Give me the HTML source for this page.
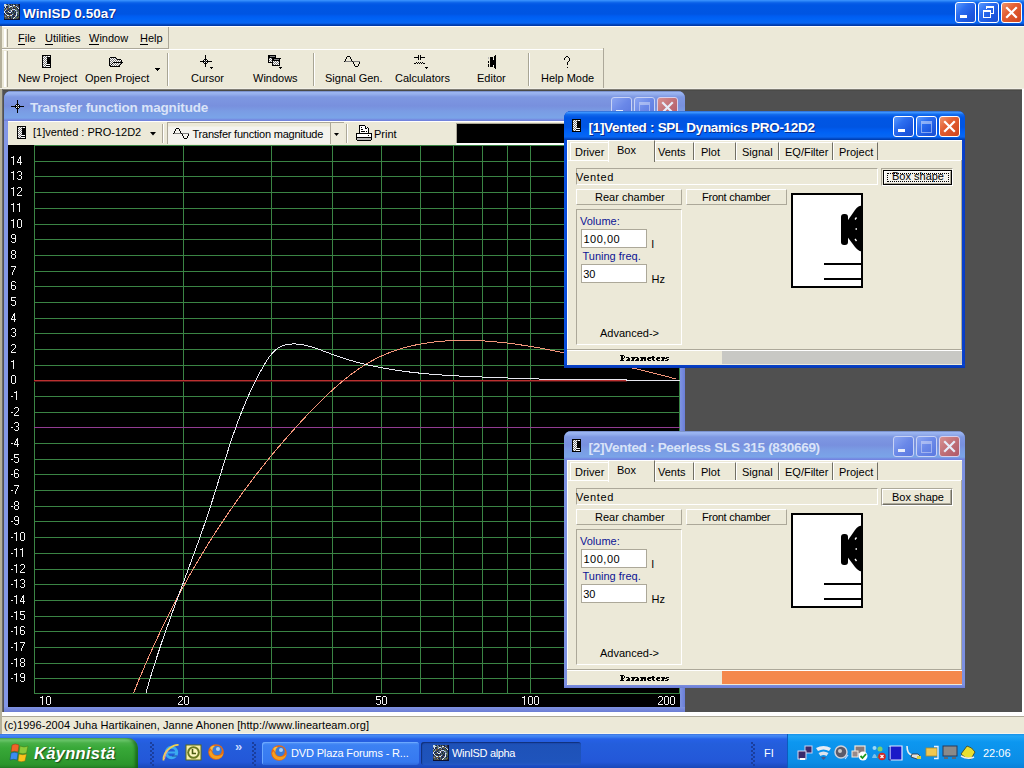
<!DOCTYPE html><html><head><meta charset="utf-8"><title>WinISD</title><style>
html,body{margin:0;padding:0}
body{width:1024px;height:768px;position:relative;overflow:hidden;background:#ECE9D8;font-family:"Liberation Sans",sans-serif;font-size:11px}
.b{position:absolute;box-sizing:content-box}
.t{position:absolute;white-space:nowrap}
svg.b{overflow:visible}
u{text-decoration:none;border-bottom:1px solid currentColor;display:inline-block;line-height:inherit}
</style></head><body>

<div class="b" style="left:0px;top:0px;width:1024px;height:26px;background:linear-gradient(to bottom,#3E96FF 0px,#2C84F8 1px,#1670EE 2px,#0A5EE8 3px,#0056E4 5px,#0055E2 14px,#005CF0 16px,#0063F6 19px,#0866F2 23px,#0452D4 24px,#003AA8 25px,#003AA8 26px)"></div>
<svg class="b" style="left:4px;top:4px" width="16" height="16" shape-rendering="crispEdges"><rect x="0" y="0" width="1" height="1" fill="#C8D8E8"/><rect x="1" y="0" width="1" height="1" fill="#C8D8E8"/><rect x="2" y="0" width="1" height="1" fill="#4E6A48"/><rect x="3" y="0" width="1" height="1" fill="#1A2448"/><rect x="4" y="0" width="1" height="1" fill="#7A8AA0"/><rect x="5" y="0" width="1" height="1" fill="#2A3A60"/><rect x="6" y="0" width="1" height="1" fill="#1A2448"/><rect x="7" y="0" width="1" height="1" fill="#5A6A58"/><rect x="8" y="0" width="1" height="1" fill="#1A2448"/><rect x="9" y="0" width="1" height="1" fill="#5A6A58"/><rect x="10" y="0" width="1" height="1" fill="#1A2448"/><rect x="11" y="0" width="1" height="1" fill="#1A2448"/><rect x="12" y="0" width="1" height="1" fill="#5A6A58"/><rect x="13" y="0" width="1" height="1" fill="#3A4A70"/><rect x="14" y="0" width="1" height="1" fill="#1A2448"/><rect x="15" y="0" width="1" height="1" fill="#0A1030"/><rect x="0" y="1" width="1" height="1" fill="#C8D8E8"/><rect x="1" y="1" width="1" height="1" fill="#C8D8E8"/><rect x="2" y="1" width="1" height="1" fill="#D8E4F4"/><rect x="3" y="1" width="1" height="1" fill="#7A8AA0"/><rect x="4" y="1" width="1" height="1" fill="#5A6A58"/><rect x="5" y="1" width="1" height="1" fill="#8A9AB0"/><rect x="6" y="1" width="1" height="1" fill="#1A2448"/><rect x="7" y="1" width="1" height="1" fill="#3A4A70"/><rect x="8" y="1" width="1" height="1" fill="#2A3A60"/><rect x="9" y="1" width="1" height="1" fill="#D8E4F4"/><rect x="10" y="1" width="1" height="1" fill="#E8F0F8"/><rect x="11" y="1" width="1" height="1" fill="#1A2448"/><rect x="12" y="1" width="1" height="1" fill="#2A3A60"/><rect x="13" y="1" width="1" height="1" fill="#6A5434"/><rect x="14" y="1" width="1" height="1" fill="#1A2448"/><rect x="15" y="1" width="1" height="1" fill="#0A1030"/><rect x="0" y="2" width="1" height="1" fill="#7A8AA0"/><rect x="1" y="2" width="1" height="1" fill="#E8F0F8"/><rect x="2" y="2" width="1" height="1" fill="#1A2448"/><rect x="3" y="2" width="1" height="1" fill="#1A2448"/><rect x="4" y="2" width="1" height="1" fill="#4E6A48"/><rect x="5" y="2" width="1" height="1" fill="#7A8AA0"/><rect x="6" y="2" width="1" height="1" fill="#E8F0F8"/><rect x="7" y="2" width="1" height="1" fill="#D8E4F4"/><rect x="8" y="2" width="1" height="1" fill="#5A6A58"/><rect x="9" y="2" width="1" height="1" fill="#7A8AA0"/><rect x="10" y="2" width="1" height="1" fill="#6A5434"/><rect x="11" y="2" width="1" height="1" fill="#5A6A58"/><rect x="12" y="2" width="1" height="1" fill="#B8CCE8"/><rect x="13" y="2" width="1" height="1" fill="#2A3A60"/><rect x="14" y="2" width="1" height="1" fill="#2A3A60"/><rect x="15" y="2" width="1" height="1" fill="#0A1030"/><rect x="0" y="3" width="1" height="1" fill="#1A2448"/><rect x="1" y="3" width="1" height="1" fill="#D8E4F4"/><rect x="2" y="3" width="1" height="1" fill="#1A2448"/><rect x="3" y="3" width="1" height="1" fill="#2A3A60"/><rect x="4" y="3" width="1" height="1" fill="#5A6A58"/><rect x="5" y="3" width="1" height="1" fill="#B8CCE8"/><rect x="6" y="3" width="1" height="1" fill="#6A5434"/><rect x="7" y="3" width="1" height="1" fill="#2A3A60"/><rect x="8" y="3" width="1" height="1" fill="#8A9AB0"/><rect x="9" y="3" width="1" height="1" fill="#1A2448"/><rect x="10" y="3" width="1" height="1" fill="#5A6A58"/><rect x="11" y="3" width="1" height="1" fill="#6A5434"/><rect x="12" y="3" width="1" height="1" fill="#1A2448"/><rect x="13" y="3" width="1" height="1" fill="#B8CCE8"/><rect x="14" y="3" width="1" height="1" fill="#5A6A58"/><rect x="15" y="3" width="1" height="1" fill="#0A1030"/><rect x="0" y="4" width="1" height="1" fill="#8A9AB0"/><rect x="1" y="4" width="1" height="1" fill="#1A2448"/><rect x="2" y="4" width="1" height="1" fill="#7A8AA0"/><rect x="3" y="4" width="1" height="1" fill="#6A5434"/><rect x="4" y="4" width="1" height="1" fill="#6A5434"/><rect x="5" y="4" width="1" height="1" fill="#2A3A60"/><rect x="6" y="4" width="1" height="1" fill="#2A3A60"/><rect x="7" y="4" width="1" height="1" fill="#5A6A58"/><rect x="8" y="4" width="1" height="1" fill="#6A5434"/><rect x="9" y="4" width="1" height="1" fill="#1A2448"/><rect x="10" y="4" width="1" height="1" fill="#1A2448"/><rect x="11" y="4" width="1" height="1" fill="#2A3A60"/><rect x="12" y="4" width="1" height="1" fill="#4E6A48"/><rect x="13" y="4" width="1" height="1" fill="#1A2448"/><rect x="14" y="4" width="1" height="1" fill="#E8F0F8"/><rect x="15" y="4" width="1" height="1" fill="#0A1030"/><rect x="0" y="5" width="1" height="1" fill="#4E6A48"/><rect x="1" y="5" width="1" height="1" fill="#4E6A48"/><rect x="2" y="5" width="1" height="1" fill="#8A9AB0"/><rect x="3" y="5" width="1" height="1" fill="#6A5434"/><rect x="4" y="5" width="1" height="1" fill="#2A3A60"/><rect x="5" y="5" width="1" height="1" fill="#2A3A60"/><rect x="6" y="5" width="1" height="1" fill="#4E6A48"/><rect x="7" y="5" width="1" height="1" fill="#1A2448"/><rect x="8" y="5" width="1" height="1" fill="#B8CCE8"/><rect x="9" y="5" width="1" height="1" fill="#B8CCE8"/><rect x="10" y="5" width="1" height="1" fill="#D8E4F4"/><rect x="11" y="5" width="1" height="1" fill="#4E6A48"/><rect x="12" y="5" width="1" height="1" fill="#5A6A58"/><rect x="13" y="5" width="1" height="1" fill="#2A3A60"/><rect x="14" y="5" width="1" height="1" fill="#2A3A60"/><rect x="15" y="5" width="1" height="1" fill="#0A1030"/><rect x="0" y="6" width="1" height="1" fill="#6A5434"/><rect x="1" y="6" width="1" height="1" fill="#B8CCE8"/><rect x="2" y="6" width="1" height="1" fill="#2A3A60"/><rect x="3" y="6" width="1" height="1" fill="#3A4A70"/><rect x="4" y="6" width="1" height="1" fill="#1A2448"/><rect x="5" y="6" width="1" height="1" fill="#5A6A58"/><rect x="6" y="6" width="1" height="1" fill="#7A8AA0"/><rect x="7" y="6" width="1" height="1" fill="#D8E4F4"/><rect x="8" y="6" width="1" height="1" fill="#6A5434"/><rect x="9" y="6" width="1" height="1" fill="#3A4A70"/><rect x="10" y="6" width="1" height="1" fill="#2A3A60"/><rect x="11" y="6" width="1" height="1" fill="#B8CCE8"/><rect x="12" y="6" width="1" height="1" fill="#8A9AB0"/><rect x="13" y="6" width="1" height="1" fill="#4E6A48"/><rect x="14" y="6" width="1" height="1" fill="#2A3A60"/><rect x="15" y="6" width="1" height="1" fill="#0A1030"/><rect x="0" y="7" width="1" height="1" fill="#D8E4F4"/><rect x="1" y="7" width="1" height="1" fill="#1A2448"/><rect x="2" y="7" width="1" height="1" fill="#1A2448"/><rect x="3" y="7" width="1" height="1" fill="#2A3A60"/><rect x="4" y="7" width="1" height="1" fill="#D8E4F4"/><rect x="5" y="7" width="1" height="1" fill="#1A2448"/><rect x="6" y="7" width="1" height="1" fill="#3A4A70"/><rect x="7" y="7" width="1" height="1" fill="#D8E4F4"/><rect x="8" y="7" width="1" height="1" fill="#2A3A60"/><rect x="9" y="7" width="1" height="1" fill="#1A2448"/><rect x="10" y="7" width="1" height="1" fill="#5A6A58"/><rect x="11" y="7" width="1" height="1" fill="#2A3A60"/><rect x="12" y="7" width="1" height="1" fill="#7A8AA0"/><rect x="13" y="7" width="1" height="1" fill="#3A4A70"/><rect x="14" y="7" width="1" height="1" fill="#4E6A48"/><rect x="15" y="7" width="1" height="1" fill="#0A1030"/><rect x="0" y="8" width="1" height="1" fill="#E8F0F8"/><rect x="1" y="8" width="1" height="1" fill="#3A4A70"/><rect x="2" y="8" width="1" height="1" fill="#4E6A48"/><rect x="3" y="8" width="1" height="1" fill="#6A5434"/><rect x="4" y="8" width="1" height="1" fill="#5A6A58"/><rect x="5" y="8" width="1" height="1" fill="#E8F0F8"/><rect x="6" y="8" width="1" height="1" fill="#E8F0F8"/><rect x="7" y="8" width="1" height="1" fill="#2A3A60"/><rect x="8" y="8" width="1" height="1" fill="#5A6A58"/><rect x="9" y="8" width="1" height="1" fill="#1A2448"/><rect x="10" y="8" width="1" height="1" fill="#4E6A48"/><rect x="11" y="8" width="1" height="1" fill="#1A2448"/><rect x="12" y="8" width="1" height="1" fill="#D8E4F4"/><rect x="13" y="8" width="1" height="1" fill="#8A9AB0"/><rect x="14" y="8" width="1" height="1" fill="#5A6A58"/><rect x="15" y="8" width="1" height="1" fill="#0A1030"/><rect x="0" y="9" width="1" height="1" fill="#1A2448"/><rect x="1" y="9" width="1" height="1" fill="#E8F0F8"/><rect x="2" y="9" width="1" height="1" fill="#1A2448"/><rect x="3" y="9" width="1" height="1" fill="#1A2448"/><rect x="4" y="9" width="1" height="1" fill="#1A2448"/><rect x="5" y="9" width="1" height="1" fill="#1A2448"/><rect x="6" y="9" width="1" height="1" fill="#2A3A60"/><rect x="7" y="9" width="1" height="1" fill="#1A2448"/><rect x="8" y="9" width="1" height="1" fill="#3A4A70"/><rect x="9" y="9" width="1" height="1" fill="#4E6A48"/><rect x="10" y="9" width="1" height="1" fill="#1A2448"/><rect x="11" y="9" width="1" height="1" fill="#2A3A60"/><rect x="12" y="9" width="1" height="1" fill="#B8CCE8"/><rect x="13" y="9" width="1" height="1" fill="#4E6A48"/><rect x="14" y="9" width="1" height="1" fill="#5A6A58"/><rect x="15" y="9" width="1" height="1" fill="#0A1030"/><rect x="0" y="10" width="1" height="1" fill="#1A2448"/><rect x="1" y="10" width="1" height="1" fill="#5A6A58"/><rect x="2" y="10" width="1" height="1" fill="#B8CCE8"/><rect x="3" y="10" width="1" height="1" fill="#5A6A58"/><rect x="4" y="10" width="1" height="1" fill="#2A3A60"/><rect x="5" y="10" width="1" height="1" fill="#1A2448"/><rect x="6" y="10" width="1" height="1" fill="#6A5434"/><rect x="7" y="10" width="1" height="1" fill="#6A5434"/><rect x="8" y="10" width="1" height="1" fill="#B8CCE8"/><rect x="9" y="10" width="1" height="1" fill="#3A4A70"/><rect x="10" y="10" width="1" height="1" fill="#1A2448"/><rect x="11" y="10" width="1" height="1" fill="#1A2448"/><rect x="12" y="10" width="1" height="1" fill="#E8F0F8"/><rect x="13" y="10" width="1" height="1" fill="#2A3A60"/><rect x="14" y="10" width="1" height="1" fill="#4E6A48"/><rect x="15" y="10" width="1" height="1" fill="#0A1030"/><rect x="0" y="11" width="1" height="1" fill="#3A4A70"/><rect x="1" y="11" width="1" height="1" fill="#6A5434"/><rect x="2" y="11" width="1" height="1" fill="#2A3A60"/><rect x="3" y="11" width="1" height="1" fill="#E8F0F8"/><rect x="4" y="11" width="1" height="1" fill="#D8E4F4"/><rect x="5" y="11" width="1" height="1" fill="#4E6A48"/><rect x="6" y="11" width="1" height="1" fill="#B8CCE8"/><rect x="7" y="11" width="1" height="1" fill="#E8F0F8"/><rect x="8" y="11" width="1" height="1" fill="#2A3A60"/><rect x="9" y="11" width="1" height="1" fill="#1A2448"/><rect x="10" y="11" width="1" height="1" fill="#6A5434"/><rect x="11" y="11" width="1" height="1" fill="#7A8AA0"/><rect x="12" y="11" width="1" height="1" fill="#E8F0F8"/><rect x="13" y="11" width="1" height="1" fill="#2A3A60"/><rect x="14" y="11" width="1" height="1" fill="#2A3A60"/><rect x="15" y="11" width="1" height="1" fill="#0A1030"/><rect x="0" y="12" width="1" height="1" fill="#6A5434"/><rect x="1" y="12" width="1" height="1" fill="#8A9AB0"/><rect x="2" y="12" width="1" height="1" fill="#3A4A70"/><rect x="3" y="12" width="1" height="1" fill="#6A5434"/><rect x="4" y="12" width="1" height="1" fill="#6A5434"/><rect x="5" y="12" width="1" height="1" fill="#6A5434"/><rect x="6" y="12" width="1" height="1" fill="#2A3A60"/><rect x="7" y="12" width="1" height="1" fill="#5A6A58"/><rect x="8" y="12" width="1" height="1" fill="#2A3A60"/><rect x="9" y="12" width="1" height="1" fill="#1A2448"/><rect x="10" y="12" width="1" height="1" fill="#1A2448"/><rect x="11" y="12" width="1" height="1" fill="#B8CCE8"/><rect x="12" y="12" width="1" height="1" fill="#5A6A58"/><rect x="13" y="12" width="1" height="1" fill="#1A2448"/><rect x="14" y="12" width="1" height="1" fill="#4E6A48"/><rect x="15" y="12" width="1" height="1" fill="#0A1030"/><rect x="0" y="13" width="1" height="1" fill="#2A3A60"/><rect x="1" y="13" width="1" height="1" fill="#6A5434"/><rect x="2" y="13" width="1" height="1" fill="#4E6A48"/><rect x="3" y="13" width="1" height="1" fill="#2A3A60"/><rect x="4" y="13" width="1" height="1" fill="#8A9AB0"/><rect x="5" y="13" width="1" height="1" fill="#1A2448"/><rect x="6" y="13" width="1" height="1" fill="#1A2448"/><rect x="7" y="13" width="1" height="1" fill="#5A6A58"/><rect x="8" y="13" width="1" height="1" fill="#2A3A60"/><rect x="9" y="13" width="1" height="1" fill="#5A6A58"/><rect x="10" y="13" width="1" height="1" fill="#E8F0F8"/><rect x="11" y="13" width="1" height="1" fill="#3A4A70"/><rect x="12" y="13" width="1" height="1" fill="#5A6A58"/><rect x="13" y="13" width="1" height="1" fill="#4E6A48"/><rect x="14" y="13" width="1" height="1" fill="#6A5434"/><rect x="15" y="13" width="1" height="1" fill="#0A1030"/><rect x="0" y="14" width="1" height="1" fill="#1A2448"/><rect x="1" y="14" width="1" height="1" fill="#4E6A48"/><rect x="2" y="14" width="1" height="1" fill="#3A4A70"/><rect x="3" y="14" width="1" height="1" fill="#6A5434"/><rect x="4" y="14" width="1" height="1" fill="#6A5434"/><rect x="5" y="14" width="1" height="1" fill="#5A6A58"/><rect x="6" y="14" width="1" height="1" fill="#1A2448"/><rect x="7" y="14" width="1" height="1" fill="#6A5434"/><rect x="8" y="14" width="1" height="1" fill="#2A3A60"/><rect x="9" y="14" width="1" height="1" fill="#E8F0F8"/><rect x="10" y="14" width="1" height="1" fill="#5A6A58"/><rect x="11" y="14" width="1" height="1" fill="#5A6A58"/><rect x="12" y="14" width="1" height="1" fill="#3A4A70"/><rect x="13" y="14" width="1" height="1" fill="#6A5434"/><rect x="14" y="14" width="1" height="1" fill="#1A2448"/><rect x="15" y="14" width="1" height="1" fill="#0A1030"/><rect x="0" y="15" width="1" height="1" fill="#0A1030"/><rect x="1" y="15" width="1" height="1" fill="#0A1030"/><rect x="2" y="15" width="1" height="1" fill="#0A1030"/><rect x="3" y="15" width="1" height="1" fill="#0A1030"/><rect x="4" y="15" width="1" height="1" fill="#0A1030"/><rect x="5" y="15" width="1" height="1" fill="#0A1030"/><rect x="6" y="15" width="1" height="1" fill="#0A1030"/><rect x="7" y="15" width="1" height="1" fill="#0A1030"/><rect x="8" y="15" width="1" height="1" fill="#0A1030"/><rect x="9" y="15" width="1" height="1" fill="#0A1030"/><rect x="10" y="15" width="1" height="1" fill="#0A1030"/><rect x="11" y="15" width="1" height="1" fill="#0A1030"/><rect x="12" y="15" width="1" height="1" fill="#0A1030"/><rect x="13" y="15" width="1" height="1" fill="#0A1030"/><rect x="14" y="15" width="1" height="1" fill="#0A1030"/><rect x="15" y="15" width="1" height="1" fill="#0A1030"/></svg>
<div class="t" style="left:23px;top:7.07px;font-size:13.5px;line-height:13.5px;font-weight:bold;color:#fff;text-shadow:1px 1px 0 #0A2C8C;letter-spacing:0.06px">WinISD 0.50a7</div>
<div class="b" style="left:955px;top:2px;width:19px;height:19px;border-radius:3px;background:linear-gradient(135deg,#5A9BFF 0%,#2C6EF0 35%,#1C58E0 70%,#1B4FD0 100%);border:1px solid #fff;"></div><div class="b" style="left:960px;top:15px;width:7px;height:3px;background:#fff"></div><div class="b" style="left:978px;top:2px;width:19px;height:19px;border-radius:3px;background:linear-gradient(135deg,#5A9BFF 0%,#2C6EF0 35%,#1C58E0 70%,#1B4FD0 100%);border:1px solid #fff;"></div><svg class="b" style="left:978px;top:2px" width="21" height="21" shape-rendering="crispEdges"><path d="M8 4 h8 v2 h-8 z M8 4 h1 v3 h-1 z M15 4 h1 v8 h-1 z M12 11 h4 v1 h-4 z" fill="#fff"/><path d="M5 8 h8 v2 h-8 z M5 8 h1 v8 h-1 z M12 8 h1 v8 h-1 z M5 15 h8 v1 h-8 z" fill="#fff"/></svg><div class="b" style="left:1001px;top:2px;width:19px;height:19px;border-radius:3px;background:linear-gradient(135deg,#F0946C 0%,#E35F32 40%,#D0441C 100%);border:1px solid #fff;"></div><svg class="b" style="left:1001px;top:2px" width="21" height="21"><path d="M6 6 L15 15 M15 6 L6 15" stroke="#fff" stroke-width="2.2" stroke-linecap="square"/></svg>
<div class="b" style="left:0px;top:26px;width:1024px;height:1px;background:#fff"></div>
<div class="b" style="left:0px;top:26px;width:2px;height:708px;background:#B5B09A"></div>
<div class="b" style="left:2px;top:27px;width:166px;height:21px;background:#ECE9D8"></div>
<div class="b" style="left:4px;top:29px;width:2px;height:18px;background:#fff"></div>
<div class="b" style="left:7px;top:29px;width:1px;height:18px;background:#ACA899"></div>
<div class="b" style="left:168px;top:27px;width:1px;height:22px;background:#ACA899"></div>
<div class="b" style="left:2px;top:48px;width:167px;height:1px;background:#ACA899"></div>
<div class="b" style="left:2px;top:49px;width:602px;height:1px;background:#fff"></div>
<div class="t" style="left:18px;top:32.69px;font-size:11px;line-height:11px;font-weight:normal;color:#000;"><u>F</u>ile</div>
<div class="t" style="left:45px;top:32.69px;font-size:11px;line-height:11px;font-weight:normal;color:#000;"><u>U</u>tilities</div>
<div class="t" style="left:89px;top:32.69px;font-size:11px;line-height:11px;font-weight:normal;color:#000;"><u>W</u>indow</div>
<div class="t" style="left:140px;top:32.69px;font-size:11px;line-height:11px;font-weight:normal;color:#000;"><u>H</u>elp</div>
<div class="b" style="left:4px;top:51px;width:2px;height:36px;background:#fff"></div>
<div class="b" style="left:7px;top:51px;width:1px;height:36px;background:#ACA899"></div>
<div class="b" style="left:167px;top:53px;width:1px;height:33px;background:#A8A594"></div>
<div class="b" style="left:168px;top:53px;width:1px;height:33px;background:#fff"></div>
<div class="b" style="left:313px;top:53px;width:1px;height:33px;background:#A8A594"></div>
<div class="b" style="left:314px;top:53px;width:1px;height:33px;background:#fff"></div>
<div class="b" style="left:528px;top:53px;width:1px;height:33px;background:#A8A594"></div>
<div class="b" style="left:529px;top:53px;width:1px;height:33px;background:#fff"></div>
<div class="b" style="left:603px;top:48px;width:1px;height:41px;background:#ACA899"></div>
<div class="b" style="left:0px;top:88px;width:1024px;height:1px;background:#F2F0E6"></div>
<div class="t" style="left:18px;top:73.19px;font-size:11px;line-height:11px;font-weight:normal;color:#000;">New Project</div>
<div class="t" style="left:85px;top:73.19px;font-size:11px;line-height:11px;font-weight:normal;color:#000;">Open Project</div>
<div class="t" style="left:191px;top:73.19px;font-size:11px;line-height:11px;font-weight:normal;color:#000;">Cursor</div>
<div class="t" style="left:253px;top:73.19px;font-size:11px;line-height:11px;font-weight:normal;color:#000;">Windows</div>
<div class="t" style="left:325px;top:73.19px;font-size:11px;line-height:11px;font-weight:normal;color:#000;">Signal Gen.</div>
<div class="t" style="left:395px;top:73.19px;font-size:11px;line-height:11px;font-weight:normal;color:#000;">Calculators</div>
<div class="t" style="left:477px;top:73.19px;font-size:11px;line-height:11px;font-weight:normal;color:#000;">Editor</div>
<div class="t" style="left:541px;top:73.19px;font-size:11px;line-height:11px;font-weight:normal;color:#000;">Help Mode</div>
<svg class="b" style="left:42px;top:55px" width="9" height="13" shape-rendering="crispEdges"><rect x="0" y="0" width="9" height="1" fill="#000"/><rect x="0" y="1" width="1" height="1" fill="#000"/><rect x="1" y="1" width="1" height="1" fill="#7a7a7a"/><rect x="2" y="1" width="1" height="1" fill="#fff"/><rect x="3" y="1" width="1" height="1" fill="#7a7a7a"/><rect x="4" y="1" width="1" height="1" fill="#fff"/><rect x="5" y="1" width="1" height="1" fill="#7a7a7a"/><rect x="6" y="1" width="2" height="1" fill="#fff"/><rect x="8" y="1" width="1" height="1" fill="#000"/><rect x="0" y="2" width="1" height="1" fill="#000"/><rect x="1" y="2" width="1" height="1" fill="#fff"/><rect x="2" y="2" width="1" height="1" fill="#7a7a7a"/><rect x="3" y="2" width="1" height="1" fill="#fff"/><rect x="4" y="2" width="1" height="1" fill="#7a7a7a"/><rect x="5" y="2" width="4" height="1" fill="#000"/><rect x="0" y="3" width="1" height="1" fill="#000"/><rect x="1" y="3" width="1" height="1" fill="#7a7a7a"/><rect x="2" y="3" width="1" height="1" fill="#fff"/><rect x="3" y="3" width="1" height="1" fill="#7a7a7a"/><rect x="4" y="3" width="1" height="1" fill="#fff"/><rect x="5" y="3" width="4" height="1" fill="#000"/><rect x="0" y="4" width="1" height="1" fill="#000"/><rect x="1" y="4" width="1" height="1" fill="#fff"/><rect x="2" y="4" width="1" height="1" fill="#7a7a7a"/><rect x="3" y="4" width="1" height="1" fill="#fff"/><rect x="4" y="4" width="1" height="1" fill="#7a7a7a"/><rect x="5" y="4" width="4" height="1" fill="#000"/><rect x="0" y="5" width="1" height="1" fill="#000"/><rect x="1" y="5" width="1" height="1" fill="#7a7a7a"/><rect x="2" y="5" width="1" height="1" fill="#fff"/><rect x="3" y="5" width="1" height="1" fill="#7a7a7a"/><rect x="4" y="5" width="1" height="1" fill="#fff"/><rect x="5" y="5" width="4" height="1" fill="#000"/><rect x="0" y="6" width="1" height="1" fill="#000"/><rect x="1" y="6" width="1" height="1" fill="#fff"/><rect x="2" y="6" width="1" height="1" fill="#7a7a7a"/><rect x="3" y="6" width="1" height="1" fill="#fff"/><rect x="4" y="6" width="1" height="1" fill="#7a7a7a"/><rect x="5" y="6" width="4" height="1" fill="#000"/><rect x="0" y="7" width="1" height="1" fill="#000"/><rect x="1" y="7" width="1" height="1" fill="#7a7a7a"/><rect x="2" y="7" width="1" height="1" fill="#fff"/><rect x="3" y="7" width="1" height="1" fill="#7a7a7a"/><rect x="4" y="7" width="1" height="1" fill="#fff"/><rect x="5" y="7" width="4" height="1" fill="#000"/><rect x="0" y="8" width="1" height="1" fill="#000"/><rect x="1" y="8" width="1" height="1" fill="#fff"/><rect x="2" y="8" width="1" height="1" fill="#7a7a7a"/><rect x="3" y="8" width="1" height="1" fill="#fff"/><rect x="4" y="8" width="1" height="1" fill="#7a7a7a"/><rect x="5" y="8" width="4" height="1" fill="#000"/><rect x="0" y="9" width="1" height="1" fill="#000"/><rect x="1" y="9" width="1" height="1" fill="#7a7a7a"/><rect x="2" y="9" width="1" height="1" fill="#fff"/><rect x="3" y="9" width="1" height="1" fill="#7a7a7a"/><rect x="4" y="9" width="4" height="1" fill="#fff"/><rect x="8" y="9" width="1" height="1" fill="#000"/><rect x="0" y="10" width="1" height="1" fill="#000"/><rect x="1" y="10" width="1" height="1" fill="#fff"/><rect x="2" y="10" width="1" height="1" fill="#7a7a7a"/><rect x="3" y="10" width="1" height="1" fill="#fff"/><rect x="4" y="10" width="5" height="1" fill="#000"/><rect x="0" y="11" width="1" height="1" fill="#000"/><rect x="1" y="11" width="1" height="1" fill="#7a7a7a"/><rect x="2" y="11" width="1" height="1" fill="#fff"/><rect x="3" y="11" width="1" height="1" fill="#7a7a7a"/><rect x="4" y="11" width="4" height="1" fill="#fff"/><rect x="8" y="11" width="1" height="1" fill="#000"/><rect x="0" y="12" width="9" height="1" fill="#000"/></svg>
<svg class="b" style="left:108px;top:57px" width="16" height="10" shape-rendering="crispEdges"><rect x="2" y="0" width="6" height="1" fill="#000"/><rect x="1" y="1" width="1" height="1" fill="#000"/><rect x="2" y="1" width="1" height="1" fill="#fff"/><rect x="3" y="1" width="1" height="1" fill="#7a7a7a"/><rect x="4" y="1" width="1" height="1" fill="#fff"/><rect x="5" y="1" width="1" height="1" fill="#7a7a7a"/><rect x="6" y="1" width="1" height="1" fill="#fff"/><rect x="7" y="1" width="1" height="1" fill="#7a7a7a"/><rect x="8" y="1" width="1" height="1" fill="#000"/><rect x="1" y="2" width="1" height="1" fill="#000"/><rect x="2" y="2" width="1" height="1" fill="#7a7a7a"/><rect x="3" y="2" width="1" height="1" fill="#fff"/><rect x="4" y="2" width="1" height="1" fill="#7a7a7a"/><rect x="5" y="2" width="1" height="1" fill="#fff"/><rect x="6" y="2" width="1" height="1" fill="#7a7a7a"/><rect x="7" y="2" width="1" height="1" fill="#fff"/><rect x="8" y="2" width="1" height="1" fill="#7a7a7a"/><rect x="9" y="2" width="4" height="1" fill="#000"/><rect x="1" y="3" width="1" height="1" fill="#000"/><rect x="2" y="3" width="1" height="1" fill="#fff"/><rect x="3" y="3" width="1" height="1" fill="#7a7a7a"/><rect x="4" y="3" width="1" height="1" fill="#fff"/><rect x="5" y="3" width="1" height="1" fill="#7a7a7a"/><rect x="6" y="3" width="1" height="1" fill="#fff"/><rect x="7" y="3" width="1" height="1" fill="#7a7a7a"/><rect x="8" y="3" width="1" height="1" fill="#fff"/><rect x="9" y="3" width="1" height="1" fill="#7a7a7a"/><rect x="10" y="3" width="1" height="1" fill="#fff"/><rect x="11" y="3" width="1" height="1" fill="#7a7a7a"/><rect x="12" y="3" width="1" height="1" fill="#fff"/><rect x="13" y="3" width="1" height="1" fill="#000"/><rect x="1" y="4" width="1" height="1" fill="#000"/><rect x="2" y="4" width="1" height="1" fill="#7a7a7a"/><rect x="3" y="4" width="1" height="1" fill="#fff"/><rect x="4" y="4" width="1" height="1" fill="#7a7a7a"/><rect x="5" y="4" width="1" height="1" fill="#fff"/><rect x="6" y="4" width="1" height="1" fill="#7a7a7a"/><rect x="7" y="4" width="1" height="1" fill="#fff"/><rect x="8" y="4" width="1" height="1" fill="#7a7a7a"/><rect x="9" y="4" width="1" height="1" fill="#fff"/><rect x="10" y="4" width="1" height="1" fill="#7a7a7a"/><rect x="11" y="4" width="1" height="1" fill="#fff"/><rect x="12" y="4" width="1" height="1" fill="#7a7a7a"/><rect x="13" y="4" width="1" height="1" fill="#000"/><rect x="1" y="5" width="1" height="1" fill="#000"/><rect x="2" y="5" width="1" height="1" fill="#fff"/><rect x="3" y="5" width="1" height="1" fill="#7a7a7a"/><rect x="4" y="5" width="1" height="1" fill="#fff"/><rect x="5" y="5" width="10" height="1" fill="#000"/><rect x="1" y="6" width="1" height="1" fill="#000"/><rect x="2" y="6" width="1" height="1" fill="#7a7a7a"/><rect x="3" y="6" width="1" height="1" fill="#fff"/><rect x="4" y="6" width="1" height="1" fill="#000"/><rect x="5" y="6" width="1" height="1" fill="#fff"/><rect x="6" y="6" width="1" height="1" fill="#7a7a7a"/><rect x="7" y="6" width="1" height="1" fill="#fff"/><rect x="8" y="6" width="1" height="1" fill="#7a7a7a"/><rect x="9" y="6" width="1" height="1" fill="#fff"/><rect x="10" y="6" width="1" height="1" fill="#7a7a7a"/><rect x="11" y="6" width="1" height="1" fill="#fff"/><rect x="12" y="6" width="1" height="1" fill="#7a7a7a"/><rect x="13" y="6" width="1" height="1" fill="#000"/><rect x="1" y="7" width="1" height="1" fill="#000"/><rect x="2" y="7" width="1" height="1" fill="#fff"/><rect x="3" y="7" width="1" height="1" fill="#000"/><rect x="4" y="7" width="1" height="1" fill="#fff"/><rect x="5" y="7" width="1" height="1" fill="#7a7a7a"/><rect x="6" y="7" width="1" height="1" fill="#fff"/><rect x="7" y="7" width="1" height="1" fill="#7a7a7a"/><rect x="8" y="7" width="1" height="1" fill="#fff"/><rect x="9" y="7" width="1" height="1" fill="#7a7a7a"/><rect x="10" y="7" width="1" height="1" fill="#fff"/><rect x="11" y="7" width="1" height="1" fill="#7a7a7a"/><rect x="12" y="7" width="1" height="1" fill="#000"/><rect x="1" y="8" width="2" height="1" fill="#000"/><rect x="3" y="8" width="1" height="1" fill="#fff"/><rect x="4" y="8" width="1" height="1" fill="#7a7a7a"/><rect x="5" y="8" width="1" height="1" fill="#fff"/><rect x="6" y="8" width="1" height="1" fill="#7a7a7a"/><rect x="7" y="8" width="1" height="1" fill="#fff"/><rect x="8" y="8" width="1" height="1" fill="#7a7a7a"/><rect x="9" y="8" width="1" height="1" fill="#fff"/><rect x="10" y="8" width="1" height="1" fill="#7a7a7a"/><rect x="11" y="8" width="1" height="1" fill="#000"/><rect x="2" y="9" width="10" height="1" fill="#000"/></svg>
<svg class="b" style="left:155px;top:68px" width="5" height="3" shape-rendering="crispEdges"><rect x="0" y="0" width="5" height="1" fill="#000"/><rect x="1" y="1" width="3" height="1" fill="#000"/><rect x="2" y="2" width="1" height="1" fill="#000"/></svg>
<svg class="b" style="left:200px;top:55px" width="12" height="12" shape-rendering="crispEdges"><rect x="5" y="0" width="1" height="1" fill="#000"/><rect x="5" y="1" width="1" height="1" fill="#000"/><rect x="5" y="2" width="1" height="1" fill="#000"/><rect x="5" y="3" width="1" height="1" fill="#000"/><rect x="4" y="4" width="3" height="1" fill="#000"/><rect x="3" y="5" width="5" height="1" fill="#000"/><rect x="0" y="6" width="6" height="1" fill="#000"/><rect x="6" y="6" width="1" height="1" fill="#808080"/><rect x="7" y="6" width="5" height="1" fill="#000"/><rect x="3" y="7" width="5" height="1" fill="#000"/><rect x="4" y="8" width="3" height="1" fill="#000"/><rect x="5" y="9" width="1" height="1" fill="#000"/><rect x="5" y="10" width="1" height="1" fill="#000"/><rect x="5" y="11" width="1" height="1" fill="#000"/></svg>
<svg class="b" style="left:203px;top:59px" width="5" height="5" shape-rendering="crispEdges"><rect x="1" y="0" width="3" height="1" fill="#000"/><rect x="0" y="1" width="1" height="1" fill="#000"/><rect x="1" y="1" width="1" height="1" fill="#fff"/><rect x="2" y="1" width="1" height="1" fill="#000"/><rect x="3" y="1" width="1" height="1" fill="#fff"/><rect x="4" y="1" width="1" height="1" fill="#000"/><rect x="0" y="2" width="2" height="1" fill="#000"/><rect x="2" y="2" width="1" height="1" fill="#808080"/><rect x="3" y="2" width="2" height="1" fill="#000"/><rect x="0" y="3" width="1" height="1" fill="#000"/><rect x="1" y="3" width="1" height="1" fill="#fff"/><rect x="2" y="3" width="1" height="1" fill="#000"/><rect x="3" y="3" width="1" height="1" fill="#fff"/><rect x="4" y="3" width="1" height="1" fill="#000"/><rect x="1" y="4" width="3" height="1" fill="#000"/></svg>
<svg class="b" style="left:210px;top:67px" width="3" height="2" shape-rendering="crispEdges"><rect x="0" y="0" width="3" height="1" fill="#000"/><rect x="1" y="1" width="1" height="1" fill="#000"/></svg>
<svg class="b" style="left:268px;top:55px" width="13" height="11" shape-rendering="crispEdges"><rect x="0" y="0" width="8" height="1" fill="#000"/><rect x="0" y="1" width="2" height="1" fill="#000"/><rect x="2" y="1" width="5" height="1" fill="#808080"/><rect x="7" y="1" width="1" height="1" fill="#000"/><rect x="0" y="2" width="8" height="1" fill="#000"/><rect x="0" y="3" width="1" height="1" fill="#000"/><rect x="1" y="3" width="1" height="1" fill="#7a7a7a"/><rect x="2" y="3" width="1" height="1" fill="#fff"/><rect x="3" y="3" width="1" height="1" fill="#7a7a7a"/><rect x="4" y="3" width="9" height="1" fill="#000"/><rect x="0" y="4" width="1" height="1" fill="#000"/><rect x="1" y="4" width="1" height="1" fill="#fff"/><rect x="2" y="4" width="1" height="1" fill="#7a7a7a"/><rect x="3" y="4" width="1" height="1" fill="#fff"/><rect x="4" y="4" width="2" height="1" fill="#000"/><rect x="6" y="4" width="5" height="1" fill="#808080"/><rect x="11" y="4" width="1" height="1" fill="#000"/><rect x="0" y="5" width="1" height="1" fill="#000"/><rect x="1" y="5" width="1" height="1" fill="#7a7a7a"/><rect x="2" y="5" width="1" height="1" fill="#fff"/><rect x="3" y="5" width="1" height="1" fill="#7a7a7a"/><rect x="4" y="5" width="8" height="1" fill="#000"/><rect x="0" y="6" width="1" height="1" fill="#000"/><rect x="1" y="6" width="1" height="1" fill="#fff"/><rect x="2" y="6" width="1" height="1" fill="#7a7a7a"/><rect x="3" y="6" width="1" height="1" fill="#fff"/><rect x="4" y="6" width="1" height="1" fill="#000"/><rect x="5" y="6" width="1" height="1" fill="#fff"/><rect x="6" y="6" width="1" height="1" fill="#7a7a7a"/><rect x="7" y="6" width="1" height="1" fill="#fff"/><rect x="8" y="6" width="1" height="1" fill="#7a7a7a"/><rect x="9" y="6" width="1" height="1" fill="#fff"/><rect x="10" y="6" width="1" height="1" fill="#7a7a7a"/><rect x="11" y="6" width="1" height="1" fill="#000"/><rect x="0" y="7" width="5" height="1" fill="#000"/><rect x="5" y="7" width="1" height="1" fill="#7a7a7a"/><rect x="6" y="7" width="1" height="1" fill="#fff"/><rect x="7" y="7" width="1" height="1" fill="#7a7a7a"/><rect x="8" y="7" width="1" height="1" fill="#fff"/><rect x="9" y="7" width="1" height="1" fill="#7a7a7a"/><rect x="10" y="7" width="1" height="1" fill="#fff"/><rect x="11" y="7" width="1" height="1" fill="#000"/><rect x="4" y="8" width="1" height="1" fill="#000"/><rect x="5" y="8" width="1" height="1" fill="#fff"/><rect x="6" y="8" width="1" height="1" fill="#7a7a7a"/><rect x="7" y="8" width="1" height="1" fill="#fff"/><rect x="8" y="8" width="1" height="1" fill="#7a7a7a"/><rect x="9" y="8" width="1" height="1" fill="#fff"/><rect x="10" y="8" width="1" height="1" fill="#7a7a7a"/><rect x="11" y="8" width="1" height="1" fill="#000"/><rect x="4" y="9" width="1" height="1" fill="#000"/><rect x="5" y="9" width="1" height="1" fill="#7a7a7a"/><rect x="6" y="9" width="1" height="1" fill="#fff"/><rect x="7" y="9" width="1" height="1" fill="#7a7a7a"/><rect x="8" y="9" width="1" height="1" fill="#fff"/><rect x="9" y="9" width="1" height="1" fill="#7a7a7a"/><rect x="10" y="9" width="1" height="1" fill="#fff"/><rect x="11" y="9" width="1" height="1" fill="#000"/><rect x="4" y="10" width="8" height="1" fill="#000"/></svg>
<svg class="b" style="left:279px;top:67px" width="3" height="2" shape-rendering="crispEdges"><rect x="0" y="0" width="3" height="1" fill="#000"/><rect x="1" y="1" width="1" height="1" fill="#000"/></svg>
<svg class="b" style="left:344px;top:56px" width="16" height="11" shape-rendering="crispEdges"><rect x="3" y="0" width="3" height="1" fill="#000"/><rect x="2" y="1" width="1" height="1" fill="#000"/><rect x="6" y="1" width="1" height="1" fill="#000"/><rect x="2" y="2" width="1" height="1" fill="#000"/><rect x="6" y="2" width="1" height="1" fill="#000"/><rect x="1" y="3" width="1" height="1" fill="#000"/><rect x="7" y="3" width="1" height="1" fill="#000"/><rect x="1" y="4" width="1" height="1" fill="#000"/><rect x="7" y="4" width="1" height="1" fill="#000"/><rect x="0" y="5" width="1" height="1" fill="#000"/><rect x="1" y="5" width="7" height="1" fill="#808080"/><rect x="8" y="5" width="1" height="1" fill="#000"/><rect x="9" y="5" width="7" height="1" fill="#808080"/><rect x="9" y="6" width="1" height="1" fill="#000"/><rect x="15" y="6" width="1" height="1" fill="#000"/><rect x="9" y="7" width="1" height="1" fill="#000"/><rect x="15" y="7" width="1" height="1" fill="#000"/><rect x="10" y="8" width="1" height="1" fill="#000"/><rect x="14" y="8" width="1" height="1" fill="#000"/><rect x="10" y="9" width="1" height="1" fill="#000"/><rect x="14" y="9" width="1" height="1" fill="#000"/><rect x="11" y="10" width="3" height="1" fill="#000"/></svg>
<svg class="b" style="left:414px;top:55px" width="11" height="9" shape-rendering="crispEdges"><rect x="4" y="0" width="1" height="1" fill="#000"/><rect x="6" y="0" width="1" height="1" fill="#000"/><rect x="4" y="1" width="1" height="1" fill="#000"/><rect x="6" y="1" width="1" height="1" fill="#000"/><rect x="0" y="2" width="5" height="1" fill="#000"/><rect x="6" y="2" width="5" height="1" fill="#000"/><rect x="4" y="3" width="1" height="1" fill="#000"/><rect x="6" y="3" width="1" height="1" fill="#000"/><rect x="4" y="4" width="1" height="1" fill="#000"/><rect x="6" y="4" width="1" height="1" fill="#000"/><rect x="2" y="7" width="1" height="1" fill="#000"/><rect x="4" y="7" width="1" height="1" fill="#000"/><rect x="6" y="7" width="1" height="1" fill="#000"/><rect x="8" y="7" width="1" height="1" fill="#000"/><rect x="0" y="8" width="2" height="1" fill="#000"/><rect x="3" y="8" width="1" height="1" fill="#000"/><rect x="5" y="8" width="1" height="1" fill="#000"/><rect x="7" y="8" width="1" height="1" fill="#000"/><rect x="9" y="8" width="2" height="1" fill="#000"/></svg>
<svg class="b" style="left:425px;top:67px" width="3" height="2" shape-rendering="crispEdges"><rect x="0" y="0" width="3" height="1" fill="#000"/><rect x="1" y="1" width="1" height="1" fill="#000"/></svg>
<svg class="b" style="left:488px;top:55px" width="8" height="14" shape-rendering="crispEdges"><rect x="7" y="0" width="1" height="1" fill="#000"/><rect x="6" y="1" width="2" height="1" fill="#000"/><rect x="0" y="2" width="1" height="1" fill="#B8B8B8"/><rect x="2" y="2" width="3" height="1" fill="#000"/><rect x="6" y="2" width="2" height="1" fill="#000"/><rect x="0" y="3" width="1" height="1" fill="#B8B8B8"/><rect x="2" y="3" width="3" height="1" fill="#000"/><rect x="6" y="3" width="2" height="1" fill="#000"/><rect x="2" y="4" width="3" height="1" fill="#000"/><rect x="5" y="4" width="1" height="1" fill="#fff"/><rect x="6" y="4" width="2" height="1" fill="#000"/><rect x="2" y="5" width="6" height="1" fill="#000"/><rect x="0" y="6" width="1" height="1" fill="#000"/><rect x="2" y="6" width="6" height="1" fill="#000"/><rect x="0" y="7" width="1" height="1" fill="#000"/><rect x="2" y="7" width="6" height="1" fill="#000"/><rect x="2" y="8" width="6" height="1" fill="#000"/><rect x="0" y="9" width="1" height="1" fill="#000"/><rect x="2" y="9" width="6" height="1" fill="#000"/><rect x="0" y="10" width="1" height="1" fill="#000"/><rect x="2" y="10" width="3" height="1" fill="#000"/><rect x="5" y="10" width="1" height="1" fill="#fff"/><rect x="6" y="10" width="2" height="1" fill="#000"/><rect x="0" y="11" width="1" height="1" fill="#000"/><rect x="2" y="11" width="3" height="1" fill="#000"/><rect x="6" y="11" width="2" height="1" fill="#000"/><rect x="6" y="12" width="2" height="1" fill="#000"/><rect x="7" y="13" width="1" height="1" fill="#000"/></svg>
<svg class="b" style="left:564px;top:56px" width="7" height="12" shape-rendering="crispEdges"><rect x="2" y="0" width="2" height="1" fill="#000"/><rect x="1" y="1" width="1" height="1" fill="#000"/><rect x="4" y="1" width="1" height="1" fill="#000"/><rect x="0" y="2" width="1" height="1" fill="#000"/><rect x="5" y="2" width="1" height="1" fill="#000"/><rect x="0" y="3" width="1" height="1" fill="#000"/><rect x="5" y="3" width="1" height="1" fill="#000"/><rect x="5" y="4" width="1" height="1" fill="#000"/><rect x="4" y="5" width="1" height="1" fill="#000"/><rect x="3" y="6" width="1" height="1" fill="#000"/><rect x="3" y="7" width="1" height="1" fill="#000"/><rect x="3" y="8" width="1" height="1" fill="#000"/><rect x="3" y="11" width="1" height="1" fill="#000"/></svg>
<div class="b" style="left:2px;top:89px;width:1022px;height:628px;background:#fff"></div>
<div class="b" style="left:2px;top:89px;width:1020px;height:623px;background:#505050"></div>
<div class="b" style="left:2px;top:89px;width:1020px;height:1px;background:#807E76"></div>
<div class="b" style="left:2px;top:90px;width:1020px;height:1px;background:#4A4A48"></div>
<div class="b" style="left:2px;top:89px;width:1px;height:623px;background:#6a6a6a"></div>
<div class="b" style="left:2px;top:716px;width:1022px;height:1px;background:#ACA899"></div>
<div class="b" style="left:4px;top:91px;width:681px;height:621px;border-radius:7px 7px 0 0;background:linear-gradient(to right,#8397E6,#7A8FE0 50%,#7D92E2);"></div>
<div class="b" style="left:4px;top:91px;width:681px;height:30px;border-radius:7px 7px 0 0;background:linear-gradient(to bottom,#5E72AC 0px,#9CB6F2 1px,#96B0EE 3px,#7E98E2 6px,#7890DE 15px,#7A9CE4 20px,#7AA4E8 27px,#7486E0 29px,#6F80D8 30px);"></div>
<div class="b" style="left:680px;top:121px;width:5px;height:591px;background:linear-gradient(to right,#7F94E2,#6A7ED6)"></div>
<div class="b" style="left:4px;top:707px;width:681px;height:5px;background:linear-gradient(to bottom,#8093E2,#6B7DD4)"></div>
<svg class="b" style="left:11px;top:100px" width="13" height="13" shape-rendering="crispEdges"><rect x="6" y="0" width="1" height="1" fill="#000"/><rect x="6" y="1" width="1" height="1" fill="#000"/><rect x="6" y="2" width="1" height="1" fill="#000"/><rect x="6" y="3" width="1" height="1" fill="#000"/><rect x="5" y="4" width="3" height="1" fill="#000"/><rect x="4" y="5" width="1" height="1" fill="#000"/><rect x="5" y="5" width="1" height="1" fill="#fff"/><rect x="6" y="5" width="1" height="1" fill="#000"/><rect x="7" y="5" width="1" height="1" fill="#fff"/><rect x="8" y="5" width="1" height="1" fill="#000"/><rect x="0" y="6" width="6" height="1" fill="#000"/><rect x="6" y="6" width="1" height="1" fill="#808080"/><rect x="7" y="6" width="6" height="1" fill="#000"/><rect x="4" y="7" width="1" height="1" fill="#000"/><rect x="5" y="7" width="1" height="1" fill="#fff"/><rect x="6" y="7" width="1" height="1" fill="#000"/><rect x="7" y="7" width="1" height="1" fill="#fff"/><rect x="8" y="7" width="1" height="1" fill="#000"/><rect x="5" y="8" width="3" height="1" fill="#000"/><rect x="6" y="9" width="1" height="1" fill="#000"/><rect x="6" y="10" width="1" height="1" fill="#000"/><rect x="6" y="11" width="1" height="1" fill="#000"/><rect x="6" y="12" width="1" height="1" fill="#000"/></svg>
<div class="t" style="left:30px;top:101.07px;font-size:13.5px;line-height:13.5px;font-weight:bold;color:#D9E3F8;letter-spacing:-0.15px">Transfer function magnitude</div>
<div class="b" style="left:611px;top:97px;width:19px;height:19px;border-radius:3px;background:linear-gradient(135deg,#8CA6F2 0%,#6A88E8 50%,#5A78E0 100%);border:1px solid #C8D3F5;"></div><div class="b" style="left:616px;top:110px;width:7px;height:3px;background:#E6ECFA"></div><div class="b" style="left:634px;top:97px;width:19px;height:19px;border-radius:3px;background:linear-gradient(135deg,#8CA6F2 0%,#6A88E8 50%,#5A78E0 100%);border:1px solid #C8D3F5;"></div><div class="b" style="left:639px;top:102px;width:9px;height:8px;border:1px solid #E6ECFA;border-top-width:3px;opacity:0.45"></div><div class="b" style="left:657px;top:97px;width:19px;height:19px;border-radius:3px;background:linear-gradient(135deg,#D89090 0%,#C07078 50%,#B05868 100%);border:1px solid #D8D0EC;"></div><svg class="b" style="left:657px;top:97px" width="21" height="21"><path d="M6 6 L15 15 M15 6 L6 15" stroke="#E6ECFA" stroke-width="2.2" stroke-linecap="square"/></svg>
<div class="b" style="left:8px;top:121px;width:672px;height:24px;background:#ECE9D8"></div>
<div class="b" style="left:8px;top:121px;width:672px;height:1px;background:#fff"></div>
<svg class="b" style="left:17px;top:126px" width="9" height="13" shape-rendering="crispEdges"><rect x="0" y="0" width="9" height="1" fill="#000"/><rect x="0" y="1" width="1" height="1" fill="#000"/><rect x="1" y="1" width="1" height="1" fill="#7a7a7a"/><rect x="2" y="1" width="1" height="1" fill="#fff"/><rect x="3" y="1" width="1" height="1" fill="#7a7a7a"/><rect x="4" y="1" width="1" height="1" fill="#fff"/><rect x="5" y="1" width="1" height="1" fill="#7a7a7a"/><rect x="6" y="1" width="2" height="1" fill="#fff"/><rect x="8" y="1" width="1" height="1" fill="#000"/><rect x="0" y="2" width="1" height="1" fill="#000"/><rect x="1" y="2" width="1" height="1" fill="#fff"/><rect x="2" y="2" width="1" height="1" fill="#7a7a7a"/><rect x="3" y="2" width="1" height="1" fill="#fff"/><rect x="4" y="2" width="1" height="1" fill="#7a7a7a"/><rect x="5" y="2" width="4" height="1" fill="#000"/><rect x="0" y="3" width="1" height="1" fill="#000"/><rect x="1" y="3" width="1" height="1" fill="#7a7a7a"/><rect x="2" y="3" width="1" height="1" fill="#fff"/><rect x="3" y="3" width="1" height="1" fill="#7a7a7a"/><rect x="4" y="3" width="1" height="1" fill="#fff"/><rect x="5" y="3" width="4" height="1" fill="#000"/><rect x="0" y="4" width="1" height="1" fill="#000"/><rect x="1" y="4" width="1" height="1" fill="#fff"/><rect x="2" y="4" width="1" height="1" fill="#7a7a7a"/><rect x="3" y="4" width="1" height="1" fill="#fff"/><rect x="4" y="4" width="1" height="1" fill="#7a7a7a"/><rect x="5" y="4" width="4" height="1" fill="#000"/><rect x="0" y="5" width="1" height="1" fill="#000"/><rect x="1" y="5" width="1" height="1" fill="#7a7a7a"/><rect x="2" y="5" width="1" height="1" fill="#fff"/><rect x="3" y="5" width="1" height="1" fill="#7a7a7a"/><rect x="4" y="5" width="1" height="1" fill="#fff"/><rect x="5" y="5" width="4" height="1" fill="#000"/><rect x="0" y="6" width="1" height="1" fill="#000"/><rect x="1" y="6" width="1" height="1" fill="#fff"/><rect x="2" y="6" width="1" height="1" fill="#7a7a7a"/><rect x="3" y="6" width="1" height="1" fill="#fff"/><rect x="4" y="6" width="1" height="1" fill="#7a7a7a"/><rect x="5" y="6" width="4" height="1" fill="#000"/><rect x="0" y="7" width="1" height="1" fill="#000"/><rect x="1" y="7" width="1" height="1" fill="#7a7a7a"/><rect x="2" y="7" width="1" height="1" fill="#fff"/><rect x="3" y="7" width="1" height="1" fill="#7a7a7a"/><rect x="4" y="7" width="1" height="1" fill="#fff"/><rect x="5" y="7" width="4" height="1" fill="#000"/><rect x="0" y="8" width="1" height="1" fill="#000"/><rect x="1" y="8" width="1" height="1" fill="#fff"/><rect x="2" y="8" width="1" height="1" fill="#7a7a7a"/><rect x="3" y="8" width="1" height="1" fill="#fff"/><rect x="4" y="8" width="1" height="1" fill="#7a7a7a"/><rect x="5" y="8" width="4" height="1" fill="#000"/><rect x="0" y="9" width="1" height="1" fill="#000"/><rect x="1" y="9" width="1" height="1" fill="#7a7a7a"/><rect x="2" y="9" width="1" height="1" fill="#fff"/><rect x="3" y="9" width="1" height="1" fill="#7a7a7a"/><rect x="4" y="9" width="4" height="1" fill="#fff"/><rect x="8" y="9" width="1" height="1" fill="#000"/><rect x="0" y="10" width="1" height="1" fill="#000"/><rect x="1" y="10" width="1" height="1" fill="#fff"/><rect x="2" y="10" width="1" height="1" fill="#7a7a7a"/><rect x="3" y="10" width="1" height="1" fill="#fff"/><rect x="4" y="10" width="5" height="1" fill="#000"/><rect x="0" y="11" width="1" height="1" fill="#000"/><rect x="1" y="11" width="1" height="1" fill="#7a7a7a"/><rect x="2" y="11" width="1" height="1" fill="#fff"/><rect x="3" y="11" width="1" height="1" fill="#7a7a7a"/><rect x="4" y="11" width="4" height="1" fill="#fff"/><rect x="8" y="11" width="1" height="1" fill="#000"/><rect x="0" y="12" width="9" height="1" fill="#000"/></svg>
<div class="t" style="left:33px;top:127.29px;font-size:11px;line-height:11px;font-weight:normal;color:#000;">[1]vented : PRO-12D2</div>
<svg class="b" style="left:150px;top:132px" width="7" height="4"><path d="M0 0 h6 l-3 3.5 z" fill="#000"/></svg>
<div class="b" style="left:162px;top:124px;width:1px;height:19px;background:#ACA899"></div>
<div class="b" style="left:163px;top:124px;width:1px;height:19px;background:#fff"></div>
<div class="b" style="left:167px;top:122px;width:163px;height:22px;border-top:1px solid #ACA899;border-left:1px solid #ACA899;width:162px;height:21px;background:linear-gradient(to bottom,#ECE9D8 0,#ECE9D8 3px,#F4F3EE 4px)"></div>
<svg class="b" style="left:173px;top:128px" width="16" height="11" shape-rendering="crispEdges"><rect x="3" y="0" width="3" height="1" fill="#000"/><rect x="2" y="1" width="1" height="1" fill="#000"/><rect x="6" y="1" width="1" height="1" fill="#000"/><rect x="2" y="2" width="1" height="1" fill="#000"/><rect x="6" y="2" width="1" height="1" fill="#000"/><rect x="1" y="3" width="1" height="1" fill="#000"/><rect x="7" y="3" width="1" height="1" fill="#000"/><rect x="1" y="4" width="1" height="1" fill="#000"/><rect x="7" y="4" width="1" height="1" fill="#000"/><rect x="0" y="5" width="1" height="1" fill="#000"/><rect x="1" y="5" width="7" height="1" fill="#808080"/><rect x="8" y="5" width="1" height="1" fill="#000"/><rect x="9" y="5" width="7" height="1" fill="#808080"/><rect x="9" y="6" width="1" height="1" fill="#000"/><rect x="15" y="6" width="1" height="1" fill="#000"/><rect x="9" y="7" width="1" height="1" fill="#000"/><rect x="15" y="7" width="1" height="1" fill="#000"/><rect x="10" y="8" width="1" height="1" fill="#000"/><rect x="14" y="8" width="1" height="1" fill="#000"/><rect x="10" y="9" width="1" height="1" fill="#000"/><rect x="14" y="9" width="1" height="1" fill="#000"/><rect x="11" y="10" width="3" height="1" fill="#000"/></svg>
<div class="t" style="left:192.5px;top:129.19px;font-size:11px;line-height:11px;font-weight:normal;color:#000;letter-spacing:-0.22px">Transfer function magnitude</div>
<div class="b" style="left:330px;top:122px;width:14px;height:22px;border-top:1px solid #ACA899;border-left:1px solid #ACA899;width:13px;height:21px;background:#EEEBDC"></div>
<svg class="b" style="left:334px;top:133px" width="7" height="4"><path d="M0 0 h5 l-2.5 3 z" fill="#000"/></svg>
<div class="b" style="left:346px;top:124px;width:1px;height:19px;background:#ACA899"></div>
<div class="b" style="left:347px;top:124px;width:1px;height:19px;background:#fff"></div>
<svg class="b" style="left:356px;top:125px" width="16" height="16" shape-rendering="crispEdges"><rect x="3" y="0" width="6" height="1" fill="#000"/><rect x="3" y="1" width="1" height="1" fill="#000"/><rect x="4" y="1" width="5" height="1" fill="#fff"/><rect x="9" y="1" width="1" height="1" fill="#000"/><rect x="3" y="2" width="1" height="1" fill="#000"/><rect x="4" y="2" width="1" height="1" fill="#fff"/><rect x="5" y="2" width="1" height="1" fill="#000"/><rect x="6" y="2" width="3" height="1" fill="#fff"/><rect x="9" y="2" width="1" height="1" fill="#000"/><rect x="10" y="2" width="1" height="1" fill="#fff"/><rect x="11" y="2" width="1" height="1" fill="#000"/><rect x="3" y="3" width="1" height="1" fill="#000"/><rect x="4" y="3" width="5" height="1" fill="#fff"/><rect x="9" y="3" width="2" height="1" fill="#000"/><rect x="11" y="3" width="1" height="1" fill="#fff"/><rect x="12" y="3" width="1" height="1" fill="#000"/><rect x="3" y="4" width="1" height="1" fill="#000"/><rect x="4" y="4" width="1" height="1" fill="#fff"/><rect x="5" y="4" width="2" height="1" fill="#000"/><rect x="7" y="4" width="5" height="1" fill="#fff"/><rect x="12" y="4" width="1" height="1" fill="#000"/><rect x="3" y="5" width="1" height="1" fill="#000"/><rect x="4" y="5" width="8" height="1" fill="#fff"/><rect x="12" y="5" width="1" height="1" fill="#000"/><rect x="3" y="6" width="1" height="1" fill="#000"/><rect x="4" y="6" width="1" height="1" fill="#fff"/><rect x="5" y="6" width="4" height="1" fill="#000"/><rect x="9" y="6" width="1" height="1" fill="#fff"/><rect x="10" y="6" width="1" height="1" fill="#000"/><rect x="11" y="6" width="1" height="1" fill="#fff"/><rect x="12" y="6" width="1" height="1" fill="#000"/><rect x="3" y="7" width="1" height="1" fill="#000"/><rect x="4" y="7" width="8" height="1" fill="#fff"/><rect x="12" y="7" width="1" height="1" fill="#000"/><rect x="0" y="8" width="16" height="1" fill="#000"/><rect x="0" y="9" width="1" height="1" fill="#000"/><rect x="1" y="9" width="14" height="1" fill="#fff"/><rect x="15" y="9" width="1" height="1" fill="#000"/><rect x="0" y="10" width="1" height="1" fill="#000"/><rect x="1" y="10" width="11" height="1" fill="#fff"/><rect x="12" y="10" width="1" height="1" fill="#000"/><rect x="13" y="10" width="2" height="1" fill="#fff"/><rect x="15" y="10" width="1" height="1" fill="#000"/><rect x="0" y="11" width="1" height="1" fill="#000"/><rect x="1" y="11" width="14" height="1" fill="#fff"/><rect x="15" y="11" width="1" height="1" fill="#000"/><rect x="0" y="12" width="16" height="1" fill="#000"/><rect x="0" y="13" width="1" height="1" fill="#000"/><rect x="1" y="13" width="14" height="1" fill="#B8B8B8"/><rect x="15" y="13" width="1" height="1" fill="#000"/><rect x="0" y="14" width="1" height="1" fill="#000"/><rect x="1" y="14" width="14" height="1" fill="#B8B8B8"/><rect x="15" y="14" width="1" height="1" fill="#000"/><rect x="1" y="15" width="14" height="1" fill="#000"/></svg>
<div class="t" style="left:374px;top:128.69px;font-size:11px;line-height:11px;font-weight:normal;color:#000;">Print</div>
<div class="b" style="left:456px;top:123px;width:224px;height:20px;background:#000;border-top:1px solid #ACA899;border-left:1px solid #ACA899;width:223px;height:19px"></div>
<div class="b" style="left:456px;top:143px;width:224px;height:2px;background:#fff"></div>
<div class="b" style="left:8px;top:145px;width:672px;height:562px;background:#000"></div>
<div class="b" style="left:8px;top:145px;width:672px;height:562px;overflow:hidden"><div class="b" style="left:-8px;top:-145px"><svg class="b" style="left:0px;top:0px" width="1024" height="768" viewBox="0 0 1024 768"><g shape-rendering="crispEdges"><rect x="34" y="161" width="646" height="1" fill="#3A8444"/><rect x="34" y="176" width="646" height="1" fill="#3A8444"/><rect x="34" y="192" width="646" height="1" fill="#3A8444"/><rect x="34" y="208" width="646" height="1" fill="#3A8444"/><rect x="34" y="224" width="646" height="1" fill="#3A8444"/><rect x="34" y="239" width="646" height="1" fill="#3A8444"/><rect x="34" y="255" width="646" height="1" fill="#3A8444"/><rect x="34" y="271" width="646" height="1" fill="#3A8444"/><rect x="34" y="286" width="646" height="1" fill="#3A8444"/><rect x="34" y="302" width="646" height="1" fill="#3A8444"/><rect x="34" y="318" width="646" height="1" fill="#3A8444"/><rect x="34" y="333" width="646" height="1" fill="#3A8444"/><rect x="34" y="349" width="646" height="1" fill="#3A8444"/><rect x="34" y="365" width="646" height="1" fill="#3A8444"/><rect x="34" y="396" width="646" height="1" fill="#3A8444"/><rect x="34" y="412" width="646" height="1" fill="#3A8444"/><rect x="34" y="443" width="646" height="1" fill="#3A8444"/><rect x="34" y="459" width="646" height="1" fill="#3A8444"/><rect x="34" y="474" width="646" height="1" fill="#3A8444"/><rect x="34" y="490" width="646" height="1" fill="#3A8444"/><rect x="34" y="506" width="646" height="1" fill="#3A8444"/><rect x="34" y="521" width="646" height="1" fill="#3A8444"/><rect x="34" y="537" width="646" height="1" fill="#3A8444"/><rect x="34" y="553" width="646" height="1" fill="#3A8444"/><rect x="34" y="569" width="646" height="1" fill="#3A8444"/><rect x="34" y="584" width="646" height="1" fill="#3A8444"/><rect x="34" y="600" width="646" height="1" fill="#3A8444"/><rect x="34" y="616" width="646" height="1" fill="#3A8444"/><rect x="34" y="631" width="646" height="1" fill="#3A8444"/><rect x="34" y="647" width="646" height="1" fill="#3A8444"/><rect x="34" y="663" width="646" height="1" fill="#3A8444"/><rect x="34" y="678" width="646" height="1" fill="#3A8444"/><rect x="34" y="145" width="646" height="1" fill="#3A8444"/><rect x="34" y="693" width="646" height="1" fill="#3A8444"/><rect x="34" y="145" width="1" height="549" fill="#3A8444"/><rect x="183" y="145" width="1" height="549" fill="#3A8444"/><rect x="271" y="145" width="1" height="549" fill="#3A8444"/><rect x="332" y="145" width="1" height="549" fill="#3A8444"/><rect x="381" y="145" width="1" height="549" fill="#3A8444"/><rect x="420" y="145" width="1" height="549" fill="#3A8444"/><rect x="453" y="145" width="1" height="549" fill="#3A8444"/><rect x="482" y="145" width="1" height="549" fill="#3A8444"/><rect x="507" y="145" width="1" height="549" fill="#3A8444"/><rect x="530" y="145" width="1" height="549" fill="#3A8444"/><rect x="679" y="145" width="1" height="549" fill="#3A8444"/><rect x="34" y="380" width="646" height="1" fill="#BC3030"/><rect x="34" y="381" width="593" height="1" fill="#501818"/><rect x="34" y="427" width="646" height="1" fill="#923C92"/></g><polyline points="133.41,693.43 133.80,692.46 134.19,691.49 134.58,690.52 134.96,689.55 135.35,688.58 135.74,687.61 136.14,686.64 136.53,685.67 136.92,684.70 137.32,683.73 137.71,682.77 138.11,681.80 138.51,680.84 138.90,679.87 139.30,678.91 139.70,677.94 140.11,676.98 140.51,676.01 140.91,675.05 141.31,674.09 141.72,673.13 142.13,672.17 142.53,671.21 142.94,670.25 143.35,669.29 143.76,668.33 144.17,667.37 144.58,666.41 144.99,665.45 145.41,664.50 145.82,663.54 146.24,662.58 146.65,661.63 147.07,660.67 147.49,659.72 147.91,658.76 148.33,657.81 148.75,656.86 149.17,655.90 149.59,654.95 150.02,654.00 150.44,653.05 150.87,652.10 151.30,651.15 151.73,650.20 152.15,649.25 152.58,648.30 153.01,647.36 153.45,646.41 153.88,645.46 154.31,644.52 154.75,643.57 155.18,642.63 155.62,641.68 156.06,640.74 156.50,639.80 156.94,638.85 157.38,637.91 157.82,636.97 158.26,636.03 158.71,635.09 159.15,634.15 159.60,633.21 160.04,632.27 160.49,631.33 160.94,630.39 161.39,629.46 161.84,628.52 162.29,627.58 162.74,626.65 163.20,625.71 163.65,624.78 164.11,623.84 164.56,622.91 165.02,621.98 165.48,621.05 165.94,620.12 166.40,619.18 166.86,618.25 167.32,617.32 167.78,616.39 168.25,615.47 168.71,614.54 169.18,613.61 169.65,612.68 170.12,611.76 170.59,610.83 171.06,609.91 171.53,608.98 172.00,608.06 172.47,607.13 172.95,606.21 173.42,605.29 173.90,604.37 174.38,603.45 174.86,602.53 175.33,601.61 175.82,600.69 176.30,599.77 176.78,598.85 177.26,597.93 177.75,597.01 178.23,596.10 178.72,595.18 179.21,594.27 179.70,593.35 180.18,592.44 180.68,591.53 181.17,590.61 181.66,589.70 182.15,588.79 182.65,587.88 183.14,586.97 183.64,586.06 184.14,585.15 184.64,584.24 185.14,583.33 185.64,582.42 186.14,581.52 186.64,580.61 187.15,579.71 187.65,578.80 188.16,577.90 188.66,576.99 189.17,576.09 189.68,575.19 190.19,574.29 190.70,573.39 191.21,572.49 191.73,571.59 192.24,570.69 192.76,569.79 193.27,568.89 193.79,567.99 194.31,567.10 194.83,566.20 195.35,565.30 195.87,564.41 196.39,563.52 196.92,562.62 197.44,561.73 197.97,560.84 198.49,559.94 199.02,559.05 199.55,558.16 200.08,557.27 200.61,556.38 201.14,555.50 201.68,554.61 202.21,553.72 202.75,552.83 203.28,551.95 203.82,551.06 204.36,550.18 204.90,549.30 205.44,548.41 205.98,547.53 206.52,546.65 207.07,545.77 207.61,544.89 208.16,544.01 208.70,543.13 209.25,542.25 209.80,541.37 210.35,540.49 210.90,539.62 211.45,538.74 212.01,537.86 212.56,536.99 213.11,536.12 213.67,535.24 214.23,534.37 214.79,533.50 215.35,532.63 215.91,531.76 216.47,530.89 217.03,530.02 217.60,529.15 218.16,528.28 218.73,527.41 219.29,526.55 219.86,525.68 220.43,524.82 221.00,523.95 221.57,523.09 222.14,522.22 222.72,521.36 223.29,520.50 223.87,519.64 224.45,518.78 225.02,517.92 225.60,517.06 226.18,516.20 226.76,515.34 227.35,514.49 227.93,513.63 228.51,512.78 229.10,511.92 229.69,511.07 230.27,510.21 230.86,509.36 231.45,508.51 232.04,507.66 232.63,506.81 233.23,505.96 233.82,505.11 234.42,504.26 235.01,503.41 235.61,502.56 236.21,501.72 236.81,500.87 237.41,500.03 238.01,499.18 238.62,498.34 239.22,497.50 239.82,496.65 240.43,495.81 241.04,494.97 241.65,494.13 242.26,493.29 242.87,492.46 243.48,491.62 244.09,490.78 244.71,489.94 245.32,489.11 245.94,488.27 246.56,487.44 247.17,486.61 247.79,485.77 248.41,484.94 249.04,484.11 249.66,483.28 250.28,482.45 250.91,481.62 251.53,480.79 252.16,479.97 252.79,479.14 253.42,478.31 254.05,477.49 254.68,476.66 255.32,475.84 255.95,475.02 256.59,474.19 257.22,473.37 257.86,472.55 258.50,471.73 259.14,470.91 259.78,470.09 260.42,469.28 261.06,468.46 261.71,467.64 262.35,466.83 263.00,466.01 263.65,465.20 264.30,464.39 264.95,463.57 265.60,462.76 266.25,461.95 266.90,461.14 267.56,460.33 268.21,459.52 268.87,458.71 269.53,457.91 270.19,457.10 270.85,456.29 271.51,455.49 272.17,454.69 272.84,453.88 273.50,453.08 274.17,452.28 274.83,451.48 275.50,450.68 276.17,449.88 276.84,449.08 277.51,448.28 278.19,447.48 278.86,446.69 279.54,445.89 280.21,445.10 280.89,444.30 281.57,443.51 282.25,442.72 282.93,441.93 283.61,441.14 284.30,440.35 284.98,439.56 285.67,438.77 286.35,437.98 287.04,437.19 287.73,436.41 288.42,435.62 289.11,434.84 289.80,434.06 290.50,433.27 291.19,432.49 291.89,431.71 292.58,430.93 293.28,430.15 293.98,429.37 294.68,428.59 295.39,427.82 296.09,427.04 296.79,426.26 297.50,425.49 298.20,424.71 298.91,423.94 299.62,423.17 300.33,422.40 301.04,421.63 301.76,420.86 302.47,420.09 303.18,419.32 303.90,418.55 304.62,417.79 305.34,417.02 306.05,416.26 306.78,415.49 307.50,414.73 308.22,413.97 308.94,413.20 309.67,412.44 310.40,411.68 311.12,410.92 311.85,410.17 312.58,409.41 313.32,408.65 314.05,407.90 314.78,407.15 315.52,406.39 316.26,405.64 316.99,404.89 317.73,404.14 318.47,403.40 319.22,402.65 319.96,401.91 320.71,401.17 321.45,400.43 322.20,399.69 322.95,398.95 323.71,398.22 324.46,397.49 325.21,396.76 325.97,396.03 326.73,395.31 327.49,394.58 328.25,393.86 329.02,393.15 329.78,392.43 330.55,391.72 331.32,391.01 332.09,390.30 332.86,389.60 333.64,388.90 334.41,388.20 335.19,387.50 335.97,386.81 336.76,386.12 337.54,385.43 338.33,384.75 339.12,384.07 339.91,383.40 340.70,382.72 341.50,382.05 342.30,381.39 343.10,380.73 343.90,380.07 344.70,379.42 345.51,378.77 346.32,378.12 347.13,377.48 347.94,376.84 348.76,376.21 349.58,375.58 350.40,374.95 351.22,374.33 352.04,373.71 352.87,373.10 353.70,372.49 354.54,371.89 355.37,371.29 356.21,370.70 357.05,370.11 357.89,369.53 358.74,368.95 359.59,368.38 360.44,367.81 361.29,367.25 362.15,366.69 363.01,366.13 363.87,365.59 364.74,365.05 365.61,364.51 366.48,363.98 367.35,363.45 368.23,362.93 369.11,362.42 369.99,361.91 370.88,361.41 371.76,360.92 372.66,360.43 373.55,359.94 374.45,359.46 375.35,358.99 376.25,358.53 377.16,358.07 378.07,357.62 378.98,357.17 379.90,356.73 380.82,356.30 381.74,355.88 382.67,355.46 383.60,355.04 384.53,354.64 385.47,354.24 386.41,353.85 387.35,353.46 388.30,353.08 389.24,352.71 390.19,352.34 391.15,351.98 392.10,351.63 393.06,351.28 394.03,350.94 394.99,350.60 395.96,350.27 396.93,349.95 397.90,349.64 398.88,349.32 399.85,349.02 400.83,348.72 401.82,348.43 402.80,348.14 403.79,347.86 404.78,347.59 405.77,347.32 406.76,347.05 407.76,346.80 408.76,346.54 409.76,346.30 410.76,346.06 411.77,345.82 412.77,345.59 413.78,345.37 414.79,345.15 415.80,344.94 416.82,344.73 417.83,344.53 418.85,344.33 419.87,344.14 420.89,343.95 421.91,343.77 422.94,343.59 423.96,343.42 424.99,343.26 426.02,343.09 427.05,342.94 428.08,342.79 429.11,342.64 430.14,342.50 431.18,342.36 432.22,342.23 433.25,342.11 434.29,341.99 435.33,341.87 436.37,341.76 437.41,341.65 438.46,341.55 439.50,341.45 440.54,341.35 441.59,341.26 442.63,341.18 443.68,341.10 444.73,341.02 445.78,340.95 446.82,340.88 447.87,340.82 448.92,340.76 449.97,340.70 451.02,340.65 452.08,340.61 453.13,340.57 454.18,340.53 455.23,340.49 456.28,340.46 457.34,340.44 458.39,340.41 459.44,340.39 460.49,340.38 461.55,340.37 462.60,340.36 463.65,340.36 464.71,340.36 465.76,340.36 466.81,340.37 467.86,340.38 468.92,340.39 469.97,340.41 471.02,340.43 472.07,340.46 473.12,340.49 474.17,340.52 475.22,340.55 476.27,340.59 477.32,340.63 478.37,340.68 479.42,340.72 480.46,340.78 481.51,340.83 482.55,340.89 483.60,340.95 484.65,341.01 485.69,341.08 486.73,341.15 487.78,341.22 488.82,341.29 489.86,341.37 490.90,341.45 491.94,341.53 492.98,341.62 494.03,341.71 495.06,341.80 496.10,341.90 497.14,341.99 498.18,342.09 499.22,342.20 500.26,342.30 501.29,342.41 502.33,342.52 503.36,342.63 504.40,342.75 505.43,342.87 506.47,342.99 507.50,343.11 508.54,343.24 509.57,343.36 510.60,343.49 511.63,343.62 512.67,343.76 513.70,343.90 514.73,344.03 515.76,344.18 516.79,344.32 517.82,344.46 518.85,344.61 519.88,344.76 520.91,344.91 521.94,345.07 522.96,345.22 523.99,345.38 525.02,345.54 526.04,345.70 527.07,345.86 528.10,346.03 529.12,346.20 530.15,346.37 531.17,346.54 532.20,346.71 533.22,346.88 534.25,347.06 535.27,347.24 536.29,347.42 537.32,347.60 538.34,347.78 539.36,347.96 540.38,348.15 541.41,348.33 542.43,348.52 543.45,348.71 544.47,348.90 545.49,349.10 546.51,349.29 547.53,349.48 548.55,349.68 549.57,349.88 550.59,350.08 551.61,350.28 552.63,350.48 553.65,350.68 554.67,350.89 555.69,351.09 556.71,351.30 557.72,351.50 558.74,351.71 559.76,351.92 560.78,352.13 561.79,352.34 562.81,352.55 563.83,352.77 564.84,352.98 565.86,353.19 566.88,353.41 567.89,353.62 568.91,353.84 569.92,354.06 570.94,354.28 571.96,354.49 572.97,354.71 573.99,354.93 575.00,355.15 576.02,355.37 577.03,355.60 578.05,355.82 579.06,356.04 580.08,356.26 581.09,356.49 582.10,356.71 583.12,356.93 584.13,357.16 585.15,357.38 586.16,357.61 587.17,357.83 588.19,358.06 589.20,358.28 590.22,358.51 591.23,358.73 592.24,358.96 593.26,359.19 594.27,359.41 595.28,359.64 596.30,359.86 597.31,360.09 598.32,360.32 599.34,360.54 600.35,360.77 601.36,360.99 602.38,361.22 603.39,361.44 604.40,361.67 605.42,361.89 606.43,362.12 607.44,362.34 608.46,362.57 609.47,362.79 610.48,363.02 611.50,363.24 612.51,363.47 613.52,363.70 614.53,363.92 615.55,364.15 616.56,364.37 617.57,364.60 618.59,364.83 619.60,365.06 620.61,365.28 621.62,365.51 622.63,365.74 623.65,365.97 624.66,366.20 625.67,366.43 626.68,366.66 627.69,366.89 628.71,367.12 629.72,367.35 630.73,367.58 631.74,367.82 632.75,368.05 633.76,368.28 634.77,368.52 635.78,368.75 636.79,368.99 637.80,369.23 638.81,369.47 639.82,369.70 640.83,369.94 641.84,370.18 642.85,370.43 643.86,370.67 644.87,370.91 645.88,371.16 646.89,371.40 647.90,371.65 648.91,371.89 649.92,372.14 650.92,372.39 651.93,372.64 652.94,372.89 653.95,373.15 654.96,373.40 655.96,373.66 656.97,373.91 657.98,374.17 658.98,374.43 659.99,374.69 660.99,374.95 662.00,375.21 663.01,375.48 664.01,375.74 665.02,376.01 666.02,376.28 667.03,376.55 668.03,376.82 669.03,377.09 670.04,377.37 671.04,377.64 672.04,377.92 673.05,378.20 674.05,378.48 675.05,378.77 676.05,379.05" fill="none" stroke="#F3957A" stroke-width="1" shape-rendering="crispEdges"/><polyline points="145.84,693.49 146.13,692.42 146.43,691.35 146.73,690.27 147.03,689.20 147.33,688.13 147.64,687.06 147.94,685.99 148.25,684.92 148.56,683.85 148.87,682.78 149.18,681.71 149.49,680.65 149.81,679.58 150.13,678.51 150.44,677.45 150.76,676.38 151.09,675.31 151.41,674.25 151.73,673.19 152.06,672.12 152.38,671.06 152.71,670.00 153.04,668.93 153.37,667.87 153.71,666.81 154.04,665.75 154.38,664.69 154.71,663.63 155.05,662.57 155.39,661.51 155.73,660.45 156.07,659.39 156.41,658.34 156.76,657.28 157.10,656.22 157.45,655.16 157.80,654.11 158.14,653.05 158.49,652.00 158.84,650.94 159.20,649.89 159.55,648.83 159.90,647.78 160.26,646.72 160.61,645.67 160.97,644.62 161.33,643.57 161.69,642.51 162.05,641.46 162.41,640.41 162.77,639.36 163.13,638.31 163.50,637.26 163.86,636.21 164.23,635.15 164.59,634.10 164.96,633.06 165.33,632.01 165.70,630.96 166.07,629.91 166.44,628.86 166.81,627.81 167.18,626.76 167.55,625.72 167.92,624.67 168.30,623.62 168.67,622.57 169.05,621.53 169.42,620.48 169.80,619.43 170.17,618.39 170.55,617.34 170.93,616.29 171.31,615.25 171.69,614.20 172.07,613.16 172.45,612.11 172.83,611.07 173.21,610.02 173.59,608.98 173.97,607.93 174.35,606.89 174.74,605.84 175.12,604.80 175.50,603.76 175.89,602.71 176.27,601.67 176.65,600.62 177.04,599.58 177.42,598.54 177.81,597.49 178.19,596.45 178.58,595.41 178.97,594.36 179.35,593.32 179.74,592.28 180.12,591.23 180.51,590.19 180.90,589.15 181.28,588.10 181.67,587.06 182.06,586.02 182.45,584.97 182.83,583.93 183.22,582.89 183.61,581.85 183.99,580.80 184.38,579.76 184.77,578.72 185.16,577.67 185.54,576.63 185.93,575.59 186.32,574.55 186.70,573.50 187.09,572.46 187.48,571.42 187.86,570.37 188.25,569.33 188.63,568.29 189.02,567.24 189.40,566.20 189.79,565.16 190.17,564.11 190.56,563.07 190.94,562.02 191.33,560.98 191.71,559.94 192.09,558.89 192.48,557.85 192.86,556.80 193.24,555.76 193.62,554.71 194.00,553.67 194.39,552.62 194.77,551.58 195.15,550.53 195.53,549.49 195.90,548.44 196.28,547.39 196.66,546.35 197.04,545.30 197.41,544.25 197.79,543.21 198.17,542.16 198.54,541.11 198.92,540.07 199.29,539.02 199.66,537.97 200.03,536.92 200.41,535.87 200.78,534.83 201.15,533.78 201.52,532.73 201.88,531.68 202.25,530.63 202.62,529.58 202.99,528.53 203.35,527.48 203.71,526.43 204.08,525.38 204.44,524.32 204.80,523.27 205.16,522.22 205.52,521.17 205.88,520.12 206.24,519.06 206.60,518.01 206.95,516.95 207.31,515.90 207.66,514.85 208.02,513.79 208.37,512.74 208.72,511.68 209.07,510.62 209.42,509.57 209.76,508.51 210.11,507.45 210.45,506.40 210.80,505.34 211.14,504.28 211.48,503.22 211.82,502.16 212.16,501.10 212.50,500.04 212.84,498.98 213.18,497.92 213.51,496.86 213.85,495.80 214.18,494.74 214.52,493.68 214.85,492.62 215.18,491.56 215.51,490.49 215.85,489.43 216.18,488.37 216.51,487.31 216.84,486.24 217.17,485.18 217.50,484.12 217.83,483.05 218.15,481.99 218.48,480.93 218.81,479.87 219.14,478.80 219.47,477.74 219.80,476.68 220.13,475.61 220.45,474.55 220.78,473.49 221.11,472.42 221.44,471.36 221.77,470.30 222.10,469.23 222.43,468.17 222.76,467.11 223.09,466.05 223.42,464.98 223.75,463.92 224.08,462.86 224.42,461.80 224.75,460.74 225.08,459.67 225.42,458.61 225.75,457.55 226.09,456.49 226.43,455.43 226.76,454.37 227.10,453.31 227.44,452.25 227.78,451.19 228.12,450.13 228.47,449.08 228.81,448.02 229.15,446.96 229.50,445.90 229.85,444.85 230.20,443.79 230.55,442.73 230.90,441.68 231.25,440.62 231.60,439.57 231.96,438.51 232.32,437.46 232.67,436.41 233.03,435.36 233.40,434.30 233.76,433.25 234.13,432.20 234.49,431.15 234.86,430.10 235.23,429.05 235.60,428.01 235.98,426.96 236.36,425.91 236.73,424.87 237.11,423.82 237.50,422.78 237.88,421.73 238.27,420.69 238.66,419.65 239.05,418.61 239.44,417.57 239.84,416.53 240.24,415.49 240.64,414.45 241.04,413.41 241.45,412.38 241.86,411.34 242.27,410.31 242.69,409.27 243.10,408.24 243.52,407.21 243.94,406.18 244.37,405.15 244.80,404.12 245.23,403.09 245.66,402.06 246.10,401.04 246.54,400.01 246.98,398.99 247.43,397.97 247.88,396.95 248.33,395.92 248.78,394.91 249.24,393.89 249.71,392.87 250.17,391.85 250.64,390.84 251.11,389.83 251.59,388.81 252.07,387.80 252.55,386.79 253.04,385.79 253.53,384.78 254.02,383.77 254.52,382.77 255.02,381.76 255.53,380.76 256.04,379.76 256.55,378.76 257.07,377.76 257.59,376.77 258.12,375.77 258.64,374.78 259.18,373.79 259.72,372.79 260.26,371.81 260.80,370.82 261.35,369.83 261.91,368.85 262.47,367.86 263.03,366.88 263.60,365.90 264.17,364.92 264.75,363.95 265.33,362.97 265.93,362.01 266.52,361.05 267.13,360.10 267.75,359.16 268.38,358.24 269.01,357.33 269.67,356.44 270.33,355.56 271.01,354.71 271.71,353.87 272.42,353.06 273.15,352.28 273.89,351.52 274.66,350.79 275.44,350.09 276.25,349.42 277.08,348.79 277.93,348.19 278.80,347.63 279.70,347.11 280.63,346.63 281.58,346.19 282.56,345.79 283.56,345.44 284.59,345.13 285.63,344.86 286.70,344.63 287.78,344.44 288.87,344.28 289.96,344.16 291.07,344.06 292.17,344.00 293.27,343.97 294.38,343.97 295.47,343.99 296.57,344.04 297.66,344.11 298.75,344.21 299.84,344.33 300.93,344.47 302.01,344.64 303.09,344.82 304.17,345.02 305.25,345.25 306.33,345.49 307.40,345.74 308.48,346.02 309.55,346.30 310.62,346.60 311.69,346.92 312.75,347.25 313.82,347.59 314.88,347.94 315.95,348.29 317.01,348.66 318.08,349.04 319.14,349.42 320.20,349.81 321.26,350.20 322.32,350.60 323.38,351.00 324.44,351.40 325.51,351.81 326.57,352.22 327.63,352.62 328.69,353.03 329.75,353.43 330.81,353.83 331.88,354.22 332.94,354.61 334.01,355.00 335.07,355.38 336.14,355.76 337.20,356.13 338.27,356.50 339.34,356.86 340.41,357.22 341.48,357.57 342.55,357.92 343.62,358.26 344.69,358.60 345.76,358.94 346.83,359.27 347.90,359.59 348.98,359.92 350.05,360.23 351.13,360.55 352.20,360.86 353.28,361.16 354.36,361.46 355.43,361.76 356.51,362.05 357.59,362.34 358.67,362.63 359.75,362.91 360.83,363.18 361.91,363.46 362.99,363.72 364.07,363.99 365.16,364.25 366.24,364.51 367.32,364.76 368.41,365.01 369.49,365.26 370.58,365.50 371.66,365.74 372.75,365.97 373.84,366.20 374.92,366.43 376.01,366.66 377.10,366.88 378.19,367.10 379.28,367.31 380.37,367.52 381.46,367.73 382.55,367.93 383.64,368.13 384.73,368.33 385.82,368.52 386.92,368.72 388.01,368.90 389.10,369.09 390.20,369.27 391.29,369.45 392.39,369.63 393.48,369.80 394.58,369.97 395.67,370.14 396.77,370.30 397.87,370.46 398.96,370.62 400.06,370.78 401.16,370.93 402.26,371.08 403.36,371.23 404.46,371.37 405.56,371.52 406.66,371.66 407.76,371.79 408.86,371.93 409.96,372.06 411.06,372.19 412.16,372.32 413.26,372.45 414.36,372.57 415.47,372.69 416.57,372.81 417.67,372.92 418.78,373.04 419.88,373.15 420.98,373.26 422.09,373.37 423.19,373.47 424.30,373.58 425.40,373.68 426.51,373.78 427.62,373.88 428.72,373.97 429.83,374.07 430.93,374.16 432.04,374.25 433.15,374.34 434.26,374.43 435.36,374.51 436.47,374.59 437.58,374.68 438.69,374.76 439.80,374.84 440.90,374.91 442.01,374.99 443.12,375.06 444.23,375.14 445.34,375.21 446.45,375.28 447.56,375.35 448.67,375.42 449.78,375.48 450.89,375.55 452.00,375.61 453.11,375.68 454.22,375.74 455.33,375.80 456.44,375.86 457.56,375.92 458.67,375.98 459.78,376.03 460.89,376.09 462.00,376.14 463.11,376.20 464.22,376.25 465.34,376.30 466.45,376.36 467.56,376.41 468.67,376.46 469.78,376.51 470.90,376.56 472.01,376.61 473.12,376.65 474.23,376.70 475.35,376.75 476.46,376.80 477.57,376.84 478.68,376.89 479.80,376.94 480.91,376.98 482.02,377.03 483.14,377.07 484.25,377.12 485.36,377.16 486.47,377.20 487.59,377.25 488.70,377.29 489.81,377.34 490.92,377.38 492.04,377.42 493.15,377.46 494.26,377.51 495.38,377.55 496.49,377.59 497.60,377.63 498.71,377.67 499.83,377.72 500.94,377.76 502.05,377.80 503.17,377.84 504.28,377.88 505.39,377.92 506.50,377.96 507.62,378.00 508.73,378.04 509.84,378.08 510.96,378.11 512.07,378.15 513.18,378.19 514.29,378.23 515.41,378.27 516.52,378.30 517.63,378.34 518.75,378.38 519.86,378.41 520.97,378.45 522.09,378.49 523.20,378.52 524.31,378.56 525.42,378.59 526.54,378.63 527.65,378.66 528.76,378.70 529.88,378.73 530.99,378.76 532.10,378.80 533.22,378.83 534.33,378.86 535.44,378.90 536.55,378.93 537.67,378.96 538.78,378.99 539.89,379.02 545.00,379.30 560.00,379.50 626.50,379.50 627.00,380.50 679.50,380.50" fill="none" stroke="#E8E8F0" stroke-width="1" shape-rendering="crispEdges"/><g fill="#F2F2F2" shape-rendering="crispEdges"><rect x="13" y="156" width="1" height="1"/><rect x="11" y="157" width="3" height="1"/><rect x="13" y="158" width="1" height="1"/><rect x="13" y="159" width="1" height="1"/><rect x="13" y="160" width="1" height="1"/><rect x="13" y="161" width="1" height="1"/><rect x="13" y="162" width="1" height="1"/><rect x="13" y="163" width="1" height="1"/><rect x="13" y="164" width="1" height="1"/><rect x="20" y="156" width="1" height="1"/><rect x="19" y="157" width="2" height="1"/><rect x="19" y="158" width="2" height="1"/><rect x="18" y="159" width="1" height="1"/><rect x="20" y="159" width="1" height="1"/><rect x="18" y="160" width="1" height="1"/><rect x="20" y="160" width="1" height="1"/><rect x="17" y="161" width="1" height="1"/><rect x="20" y="161" width="1" height="1"/><rect x="17" y="162" width="5" height="1"/><rect x="20" y="163" width="1" height="1"/><rect x="20" y="164" width="1" height="1"/><rect x="13" y="171" width="1" height="1"/><rect x="11" y="172" width="3" height="1"/><rect x="13" y="173" width="1" height="1"/><rect x="13" y="174" width="1" height="1"/><rect x="13" y="175" width="1" height="1"/><rect x="13" y="176" width="1" height="1"/><rect x="13" y="177" width="1" height="1"/><rect x="13" y="178" width="1" height="1"/><rect x="13" y="179" width="1" height="1"/><rect x="18" y="171" width="3" height="1"/><rect x="17" y="172" width="1" height="1"/><rect x="21" y="172" width="1" height="1"/><rect x="21" y="173" width="1" height="1"/><rect x="21" y="174" width="1" height="1"/><rect x="19" y="175" width="2" height="1"/><rect x="21" y="176" width="1" height="1"/><rect x="21" y="177" width="1" height="1"/><rect x="17" y="178" width="1" height="1"/><rect x="21" y="178" width="1" height="1"/><rect x="18" y="179" width="3" height="1"/><rect x="13" y="187" width="1" height="1"/><rect x="11" y="188" width="3" height="1"/><rect x="13" y="189" width="1" height="1"/><rect x="13" y="190" width="1" height="1"/><rect x="13" y="191" width="1" height="1"/><rect x="13" y="192" width="1" height="1"/><rect x="13" y="193" width="1" height="1"/><rect x="13" y="194" width="1" height="1"/><rect x="13" y="195" width="1" height="1"/><rect x="18" y="187" width="3" height="1"/><rect x="17" y="188" width="1" height="1"/><rect x="21" y="188" width="1" height="1"/><rect x="21" y="189" width="1" height="1"/><rect x="21" y="190" width="1" height="1"/><rect x="20" y="191" width="1" height="1"/><rect x="19" y="192" width="1" height="1"/><rect x="18" y="193" width="1" height="1"/><rect x="17" y="194" width="1" height="1"/><rect x="17" y="195" width="5" height="1"/><rect x="13" y="203" width="1" height="1"/><rect x="11" y="204" width="3" height="1"/><rect x="13" y="205" width="1" height="1"/><rect x="13" y="206" width="1" height="1"/><rect x="13" y="207" width="1" height="1"/><rect x="13" y="208" width="1" height="1"/><rect x="13" y="209" width="1" height="1"/><rect x="13" y="210" width="1" height="1"/><rect x="13" y="211" width="1" height="1"/><rect x="19" y="203" width="1" height="1"/><rect x="17" y="204" width="3" height="1"/><rect x="19" y="205" width="1" height="1"/><rect x="19" y="206" width="1" height="1"/><rect x="19" y="207" width="1" height="1"/><rect x="19" y="208" width="1" height="1"/><rect x="19" y="209" width="1" height="1"/><rect x="19" y="210" width="1" height="1"/><rect x="19" y="211" width="1" height="1"/><rect x="13" y="219" width="1" height="1"/><rect x="11" y="220" width="3" height="1"/><rect x="13" y="221" width="1" height="1"/><rect x="13" y="222" width="1" height="1"/><rect x="13" y="223" width="1" height="1"/><rect x="13" y="224" width="1" height="1"/><rect x="13" y="225" width="1" height="1"/><rect x="13" y="226" width="1" height="1"/><rect x="13" y="227" width="1" height="1"/><rect x="18" y="219" width="3" height="1"/><rect x="17" y="220" width="1" height="1"/><rect x="21" y="220" width="1" height="1"/><rect x="17" y="221" width="1" height="1"/><rect x="21" y="221" width="1" height="1"/><rect x="17" y="222" width="1" height="1"/><rect x="21" y="222" width="1" height="1"/><rect x="17" y="223" width="1" height="1"/><rect x="21" y="223" width="1" height="1"/><rect x="17" y="224" width="1" height="1"/><rect x="21" y="224" width="1" height="1"/><rect x="17" y="225" width="1" height="1"/><rect x="21" y="225" width="1" height="1"/><rect x="17" y="226" width="1" height="1"/><rect x="21" y="226" width="1" height="1"/><rect x="18" y="227" width="3" height="1"/><rect x="12" y="234" width="3" height="1"/><rect x="11" y="235" width="1" height="1"/><rect x="15" y="235" width="1" height="1"/><rect x="11" y="236" width="1" height="1"/><rect x="15" y="236" width="1" height="1"/><rect x="11" y="237" width="1" height="1"/><rect x="15" y="237" width="1" height="1"/><rect x="12" y="238" width="4" height="1"/><rect x="15" y="239" width="1" height="1"/><rect x="15" y="240" width="1" height="1"/><rect x="11" y="241" width="1" height="1"/><rect x="15" y="241" width="1" height="1"/><rect x="12" y="242" width="3" height="1"/><rect x="12" y="250" width="3" height="1"/><rect x="11" y="251" width="1" height="1"/><rect x="15" y="251" width="1" height="1"/><rect x="11" y="252" width="1" height="1"/><rect x="15" y="252" width="1" height="1"/><rect x="11" y="253" width="1" height="1"/><rect x="15" y="253" width="1" height="1"/><rect x="12" y="254" width="3" height="1"/><rect x="11" y="255" width="1" height="1"/><rect x="15" y="255" width="1" height="1"/><rect x="11" y="256" width="1" height="1"/><rect x="15" y="256" width="1" height="1"/><rect x="11" y="257" width="1" height="1"/><rect x="15" y="257" width="1" height="1"/><rect x="12" y="258" width="3" height="1"/><rect x="11" y="266" width="5" height="1"/><rect x="15" y="267" width="1" height="1"/><rect x="14" y="268" width="1" height="1"/><rect x="14" y="269" width="1" height="1"/><rect x="13" y="270" width="1" height="1"/><rect x="13" y="271" width="1" height="1"/><rect x="12" y="272" width="1" height="1"/><rect x="12" y="273" width="1" height="1"/><rect x="12" y="274" width="1" height="1"/><rect x="12" y="281" width="3" height="1"/><rect x="11" y="282" width="1" height="1"/><rect x="15" y="282" width="1" height="1"/><rect x="11" y="283" width="1" height="1"/><rect x="11" y="284" width="1" height="1"/><rect x="11" y="285" width="4" height="1"/><rect x="11" y="286" width="1" height="1"/><rect x="15" y="286" width="1" height="1"/><rect x="11" y="287" width="1" height="1"/><rect x="15" y="287" width="1" height="1"/><rect x="11" y="288" width="1" height="1"/><rect x="15" y="288" width="1" height="1"/><rect x="12" y="289" width="3" height="1"/><rect x="11" y="297" width="5" height="1"/><rect x="11" y="298" width="1" height="1"/><rect x="11" y="299" width="1" height="1"/><rect x="11" y="300" width="4" height="1"/><rect x="15" y="301" width="1" height="1"/><rect x="15" y="302" width="1" height="1"/><rect x="15" y="303" width="1" height="1"/><rect x="11" y="304" width="1" height="1"/><rect x="15" y="304" width="1" height="1"/><rect x="12" y="305" width="3" height="1"/><rect x="14" y="313" width="1" height="1"/><rect x="13" y="314" width="2" height="1"/><rect x="13" y="315" width="2" height="1"/><rect x="12" y="316" width="1" height="1"/><rect x="14" y="316" width="1" height="1"/><rect x="12" y="317" width="1" height="1"/><rect x="14" y="317" width="1" height="1"/><rect x="11" y="318" width="1" height="1"/><rect x="14" y="318" width="1" height="1"/><rect x="11" y="319" width="5" height="1"/><rect x="14" y="320" width="1" height="1"/><rect x="14" y="321" width="1" height="1"/><rect x="12" y="328" width="3" height="1"/><rect x="11" y="329" width="1" height="1"/><rect x="15" y="329" width="1" height="1"/><rect x="15" y="330" width="1" height="1"/><rect x="15" y="331" width="1" height="1"/><rect x="13" y="332" width="2" height="1"/><rect x="15" y="333" width="1" height="1"/><rect x="15" y="334" width="1" height="1"/><rect x="11" y="335" width="1" height="1"/><rect x="15" y="335" width="1" height="1"/><rect x="12" y="336" width="3" height="1"/><rect x="12" y="344" width="3" height="1"/><rect x="11" y="345" width="1" height="1"/><rect x="15" y="345" width="1" height="1"/><rect x="15" y="346" width="1" height="1"/><rect x="15" y="347" width="1" height="1"/><rect x="14" y="348" width="1" height="1"/><rect x="13" y="349" width="1" height="1"/><rect x="12" y="350" width="1" height="1"/><rect x="11" y="351" width="1" height="1"/><rect x="11" y="352" width="5" height="1"/><rect x="13" y="360" width="1" height="1"/><rect x="11" y="361" width="3" height="1"/><rect x="13" y="362" width="1" height="1"/><rect x="13" y="363" width="1" height="1"/><rect x="13" y="364" width="1" height="1"/><rect x="13" y="365" width="1" height="1"/><rect x="13" y="366" width="1" height="1"/><rect x="13" y="367" width="1" height="1"/><rect x="13" y="368" width="1" height="1"/><rect x="12" y="375" width="3" height="1"/><rect x="11" y="376" width="1" height="1"/><rect x="15" y="376" width="1" height="1"/><rect x="11" y="377" width="1" height="1"/><rect x="15" y="377" width="1" height="1"/><rect x="11" y="378" width="1" height="1"/><rect x="15" y="378" width="1" height="1"/><rect x="11" y="379" width="1" height="1"/><rect x="15" y="379" width="1" height="1"/><rect x="11" y="380" width="1" height="1"/><rect x="15" y="380" width="1" height="1"/><rect x="11" y="381" width="1" height="1"/><rect x="15" y="381" width="1" height="1"/><rect x="11" y="382" width="1" height="1"/><rect x="15" y="382" width="1" height="1"/><rect x="12" y="383" width="3" height="1"/><rect x="11" y="396" width="2" height="1"/><rect x="16" y="391" width="1" height="1"/><rect x="14" y="392" width="3" height="1"/><rect x="16" y="393" width="1" height="1"/><rect x="16" y="394" width="1" height="1"/><rect x="16" y="395" width="1" height="1"/><rect x="16" y="396" width="1" height="1"/><rect x="16" y="397" width="1" height="1"/><rect x="16" y="398" width="1" height="1"/><rect x="16" y="399" width="1" height="1"/><rect x="11" y="412" width="2" height="1"/><rect x="15" y="407" width="3" height="1"/><rect x="14" y="408" width="1" height="1"/><rect x="18" y="408" width="1" height="1"/><rect x="18" y="409" width="1" height="1"/><rect x="18" y="410" width="1" height="1"/><rect x="17" y="411" width="1" height="1"/><rect x="16" y="412" width="1" height="1"/><rect x="15" y="413" width="1" height="1"/><rect x="14" y="414" width="1" height="1"/><rect x="14" y="415" width="5" height="1"/><rect x="11" y="427" width="2" height="1"/><rect x="15" y="422" width="3" height="1"/><rect x="14" y="423" width="1" height="1"/><rect x="18" y="423" width="1" height="1"/><rect x="18" y="424" width="1" height="1"/><rect x="18" y="425" width="1" height="1"/><rect x="16" y="426" width="2" height="1"/><rect x="18" y="427" width="1" height="1"/><rect x="18" y="428" width="1" height="1"/><rect x="14" y="429" width="1" height="1"/><rect x="18" y="429" width="1" height="1"/><rect x="15" y="430" width="3" height="1"/><rect x="11" y="443" width="2" height="1"/><rect x="17" y="438" width="1" height="1"/><rect x="16" y="439" width="2" height="1"/><rect x="16" y="440" width="2" height="1"/><rect x="15" y="441" width="1" height="1"/><rect x="17" y="441" width="1" height="1"/><rect x="15" y="442" width="1" height="1"/><rect x="17" y="442" width="1" height="1"/><rect x="14" y="443" width="1" height="1"/><rect x="17" y="443" width="1" height="1"/><rect x="14" y="444" width="5" height="1"/><rect x="17" y="445" width="1" height="1"/><rect x="17" y="446" width="1" height="1"/><rect x="11" y="459" width="2" height="1"/><rect x="14" y="454" width="5" height="1"/><rect x="14" y="455" width="1" height="1"/><rect x="14" y="456" width="1" height="1"/><rect x="14" y="457" width="4" height="1"/><rect x="18" y="458" width="1" height="1"/><rect x="18" y="459" width="1" height="1"/><rect x="18" y="460" width="1" height="1"/><rect x="14" y="461" width="1" height="1"/><rect x="18" y="461" width="1" height="1"/><rect x="15" y="462" width="3" height="1"/><rect x="11" y="474" width="2" height="1"/><rect x="15" y="469" width="3" height="1"/><rect x="14" y="470" width="1" height="1"/><rect x="18" y="470" width="1" height="1"/><rect x="14" y="471" width="1" height="1"/><rect x="14" y="472" width="1" height="1"/><rect x="14" y="473" width="4" height="1"/><rect x="14" y="474" width="1" height="1"/><rect x="18" y="474" width="1" height="1"/><rect x="14" y="475" width="1" height="1"/><rect x="18" y="475" width="1" height="1"/><rect x="14" y="476" width="1" height="1"/><rect x="18" y="476" width="1" height="1"/><rect x="15" y="477" width="3" height="1"/><rect x="11" y="490" width="2" height="1"/><rect x="14" y="485" width="5" height="1"/><rect x="18" y="486" width="1" height="1"/><rect x="17" y="487" width="1" height="1"/><rect x="17" y="488" width="1" height="1"/><rect x="16" y="489" width="1" height="1"/><rect x="16" y="490" width="1" height="1"/><rect x="15" y="491" width="1" height="1"/><rect x="15" y="492" width="1" height="1"/><rect x="15" y="493" width="1" height="1"/><rect x="11" y="506" width="2" height="1"/><rect x="15" y="501" width="3" height="1"/><rect x="14" y="502" width="1" height="1"/><rect x="18" y="502" width="1" height="1"/><rect x="14" y="503" width="1" height="1"/><rect x="18" y="503" width="1" height="1"/><rect x="14" y="504" width="1" height="1"/><rect x="18" y="504" width="1" height="1"/><rect x="15" y="505" width="3" height="1"/><rect x="14" y="506" width="1" height="1"/><rect x="18" y="506" width="1" height="1"/><rect x="14" y="507" width="1" height="1"/><rect x="18" y="507" width="1" height="1"/><rect x="14" y="508" width="1" height="1"/><rect x="18" y="508" width="1" height="1"/><rect x="15" y="509" width="3" height="1"/><rect x="11" y="521" width="2" height="1"/><rect x="15" y="516" width="3" height="1"/><rect x="14" y="517" width="1" height="1"/><rect x="18" y="517" width="1" height="1"/><rect x="14" y="518" width="1" height="1"/><rect x="18" y="518" width="1" height="1"/><rect x="14" y="519" width="1" height="1"/><rect x="18" y="519" width="1" height="1"/><rect x="15" y="520" width="4" height="1"/><rect x="18" y="521" width="1" height="1"/><rect x="18" y="522" width="1" height="1"/><rect x="14" y="523" width="1" height="1"/><rect x="18" y="523" width="1" height="1"/><rect x="15" y="524" width="3" height="1"/><rect x="11" y="537" width="2" height="1"/><rect x="16" y="532" width="1" height="1"/><rect x="14" y="533" width="3" height="1"/><rect x="16" y="534" width="1" height="1"/><rect x="16" y="535" width="1" height="1"/><rect x="16" y="536" width="1" height="1"/><rect x="16" y="537" width="1" height="1"/><rect x="16" y="538" width="1" height="1"/><rect x="16" y="539" width="1" height="1"/><rect x="16" y="540" width="1" height="1"/><rect x="21" y="532" width="3" height="1"/><rect x="20" y="533" width="1" height="1"/><rect x="24" y="533" width="1" height="1"/><rect x="20" y="534" width="1" height="1"/><rect x="24" y="534" width="1" height="1"/><rect x="20" y="535" width="1" height="1"/><rect x="24" y="535" width="1" height="1"/><rect x="20" y="536" width="1" height="1"/><rect x="24" y="536" width="1" height="1"/><rect x="20" y="537" width="1" height="1"/><rect x="24" y="537" width="1" height="1"/><rect x="20" y="538" width="1" height="1"/><rect x="24" y="538" width="1" height="1"/><rect x="20" y="539" width="1" height="1"/><rect x="24" y="539" width="1" height="1"/><rect x="21" y="540" width="3" height="1"/><rect x="11" y="553" width="2" height="1"/><rect x="16" y="548" width="1" height="1"/><rect x="14" y="549" width="3" height="1"/><rect x="16" y="550" width="1" height="1"/><rect x="16" y="551" width="1" height="1"/><rect x="16" y="552" width="1" height="1"/><rect x="16" y="553" width="1" height="1"/><rect x="16" y="554" width="1" height="1"/><rect x="16" y="555" width="1" height="1"/><rect x="16" y="556" width="1" height="1"/><rect x="22" y="548" width="1" height="1"/><rect x="20" y="549" width="3" height="1"/><rect x="22" y="550" width="1" height="1"/><rect x="22" y="551" width="1" height="1"/><rect x="22" y="552" width="1" height="1"/><rect x="22" y="553" width="1" height="1"/><rect x="22" y="554" width="1" height="1"/><rect x="22" y="555" width="1" height="1"/><rect x="22" y="556" width="1" height="1"/><rect x="11" y="569" width="2" height="1"/><rect x="16" y="564" width="1" height="1"/><rect x="14" y="565" width="3" height="1"/><rect x="16" y="566" width="1" height="1"/><rect x="16" y="567" width="1" height="1"/><rect x="16" y="568" width="1" height="1"/><rect x="16" y="569" width="1" height="1"/><rect x="16" y="570" width="1" height="1"/><rect x="16" y="571" width="1" height="1"/><rect x="16" y="572" width="1" height="1"/><rect x="21" y="564" width="3" height="1"/><rect x="20" y="565" width="1" height="1"/><rect x="24" y="565" width="1" height="1"/><rect x="24" y="566" width="1" height="1"/><rect x="24" y="567" width="1" height="1"/><rect x="23" y="568" width="1" height="1"/><rect x="22" y="569" width="1" height="1"/><rect x="21" y="570" width="1" height="1"/><rect x="20" y="571" width="1" height="1"/><rect x="20" y="572" width="5" height="1"/><rect x="11" y="584" width="2" height="1"/><rect x="16" y="579" width="1" height="1"/><rect x="14" y="580" width="3" height="1"/><rect x="16" y="581" width="1" height="1"/><rect x="16" y="582" width="1" height="1"/><rect x="16" y="583" width="1" height="1"/><rect x="16" y="584" width="1" height="1"/><rect x="16" y="585" width="1" height="1"/><rect x="16" y="586" width="1" height="1"/><rect x="16" y="587" width="1" height="1"/><rect x="21" y="579" width="3" height="1"/><rect x="20" y="580" width="1" height="1"/><rect x="24" y="580" width="1" height="1"/><rect x="24" y="581" width="1" height="1"/><rect x="24" y="582" width="1" height="1"/><rect x="22" y="583" width="2" height="1"/><rect x="24" y="584" width="1" height="1"/><rect x="24" y="585" width="1" height="1"/><rect x="20" y="586" width="1" height="1"/><rect x="24" y="586" width="1" height="1"/><rect x="21" y="587" width="3" height="1"/><rect x="11" y="600" width="2" height="1"/><rect x="16" y="595" width="1" height="1"/><rect x="14" y="596" width="3" height="1"/><rect x="16" y="597" width="1" height="1"/><rect x="16" y="598" width="1" height="1"/><rect x="16" y="599" width="1" height="1"/><rect x="16" y="600" width="1" height="1"/><rect x="16" y="601" width="1" height="1"/><rect x="16" y="602" width="1" height="1"/><rect x="16" y="603" width="1" height="1"/><rect x="23" y="595" width="1" height="1"/><rect x="22" y="596" width="2" height="1"/><rect x="22" y="597" width="2" height="1"/><rect x="21" y="598" width="1" height="1"/><rect x="23" y="598" width="1" height="1"/><rect x="21" y="599" width="1" height="1"/><rect x="23" y="599" width="1" height="1"/><rect x="20" y="600" width="1" height="1"/><rect x="23" y="600" width="1" height="1"/><rect x="20" y="601" width="5" height="1"/><rect x="23" y="602" width="1" height="1"/><rect x="23" y="603" width="1" height="1"/><rect x="11" y="616" width="2" height="1"/><rect x="16" y="611" width="1" height="1"/><rect x="14" y="612" width="3" height="1"/><rect x="16" y="613" width="1" height="1"/><rect x="16" y="614" width="1" height="1"/><rect x="16" y="615" width="1" height="1"/><rect x="16" y="616" width="1" height="1"/><rect x="16" y="617" width="1" height="1"/><rect x="16" y="618" width="1" height="1"/><rect x="16" y="619" width="1" height="1"/><rect x="20" y="611" width="5" height="1"/><rect x="20" y="612" width="1" height="1"/><rect x="20" y="613" width="1" height="1"/><rect x="20" y="614" width="4" height="1"/><rect x="24" y="615" width="1" height="1"/><rect x="24" y="616" width="1" height="1"/><rect x="24" y="617" width="1" height="1"/><rect x="20" y="618" width="1" height="1"/><rect x="24" y="618" width="1" height="1"/><rect x="21" y="619" width="3" height="1"/><rect x="11" y="631" width="2" height="1"/><rect x="16" y="626" width="1" height="1"/><rect x="14" y="627" width="3" height="1"/><rect x="16" y="628" width="1" height="1"/><rect x="16" y="629" width="1" height="1"/><rect x="16" y="630" width="1" height="1"/><rect x="16" y="631" width="1" height="1"/><rect x="16" y="632" width="1" height="1"/><rect x="16" y="633" width="1" height="1"/><rect x="16" y="634" width="1" height="1"/><rect x="21" y="626" width="3" height="1"/><rect x="20" y="627" width="1" height="1"/><rect x="24" y="627" width="1" height="1"/><rect x="20" y="628" width="1" height="1"/><rect x="20" y="629" width="1" height="1"/><rect x="20" y="630" width="4" height="1"/><rect x="20" y="631" width="1" height="1"/><rect x="24" y="631" width="1" height="1"/><rect x="20" y="632" width="1" height="1"/><rect x="24" y="632" width="1" height="1"/><rect x="20" y="633" width="1" height="1"/><rect x="24" y="633" width="1" height="1"/><rect x="21" y="634" width="3" height="1"/><rect x="11" y="647" width="2" height="1"/><rect x="16" y="642" width="1" height="1"/><rect x="14" y="643" width="3" height="1"/><rect x="16" y="644" width="1" height="1"/><rect x="16" y="645" width="1" height="1"/><rect x="16" y="646" width="1" height="1"/><rect x="16" y="647" width="1" height="1"/><rect x="16" y="648" width="1" height="1"/><rect x="16" y="649" width="1" height="1"/><rect x="16" y="650" width="1" height="1"/><rect x="20" y="642" width="5" height="1"/><rect x="24" y="643" width="1" height="1"/><rect x="23" y="644" width="1" height="1"/><rect x="23" y="645" width="1" height="1"/><rect x="22" y="646" width="1" height="1"/><rect x="22" y="647" width="1" height="1"/><rect x="21" y="648" width="1" height="1"/><rect x="21" y="649" width="1" height="1"/><rect x="21" y="650" width="1" height="1"/><rect x="11" y="663" width="2" height="1"/><rect x="16" y="658" width="1" height="1"/><rect x="14" y="659" width="3" height="1"/><rect x="16" y="660" width="1" height="1"/><rect x="16" y="661" width="1" height="1"/><rect x="16" y="662" width="1" height="1"/><rect x="16" y="663" width="1" height="1"/><rect x="16" y="664" width="1" height="1"/><rect x="16" y="665" width="1" height="1"/><rect x="16" y="666" width="1" height="1"/><rect x="21" y="658" width="3" height="1"/><rect x="20" y="659" width="1" height="1"/><rect x="24" y="659" width="1" height="1"/><rect x="20" y="660" width="1" height="1"/><rect x="24" y="660" width="1" height="1"/><rect x="20" y="661" width="1" height="1"/><rect x="24" y="661" width="1" height="1"/><rect x="21" y="662" width="3" height="1"/><rect x="20" y="663" width="1" height="1"/><rect x="24" y="663" width="1" height="1"/><rect x="20" y="664" width="1" height="1"/><rect x="24" y="664" width="1" height="1"/><rect x="20" y="665" width="1" height="1"/><rect x="24" y="665" width="1" height="1"/><rect x="21" y="666" width="3" height="1"/><rect x="11" y="678" width="2" height="1"/><rect x="16" y="673" width="1" height="1"/><rect x="14" y="674" width="3" height="1"/><rect x="16" y="675" width="1" height="1"/><rect x="16" y="676" width="1" height="1"/><rect x="16" y="677" width="1" height="1"/><rect x="16" y="678" width="1" height="1"/><rect x="16" y="679" width="1" height="1"/><rect x="16" y="680" width="1" height="1"/><rect x="16" y="681" width="1" height="1"/><rect x="21" y="673" width="3" height="1"/><rect x="20" y="674" width="1" height="1"/><rect x="24" y="674" width="1" height="1"/><rect x="20" y="675" width="1" height="1"/><rect x="24" y="675" width="1" height="1"/><rect x="20" y="676" width="1" height="1"/><rect x="24" y="676" width="1" height="1"/><rect x="21" y="677" width="4" height="1"/><rect x="24" y="678" width="1" height="1"/><rect x="24" y="679" width="1" height="1"/><rect x="20" y="680" width="1" height="1"/><rect x="24" y="680" width="1" height="1"/><rect x="21" y="681" width="3" height="1"/><rect x="42" y="696" width="1" height="1"/><rect x="40" y="697" width="3" height="1"/><rect x="42" y="698" width="1" height="1"/><rect x="42" y="699" width="1" height="1"/><rect x="42" y="700" width="1" height="1"/><rect x="42" y="701" width="1" height="1"/><rect x="42" y="702" width="1" height="1"/><rect x="42" y="703" width="1" height="1"/><rect x="42" y="704" width="1" height="1"/><rect x="47" y="696" width="3" height="1"/><rect x="46" y="697" width="1" height="1"/><rect x="50" y="697" width="1" height="1"/><rect x="46" y="698" width="1" height="1"/><rect x="50" y="698" width="1" height="1"/><rect x="46" y="699" width="1" height="1"/><rect x="50" y="699" width="1" height="1"/><rect x="46" y="700" width="1" height="1"/><rect x="50" y="700" width="1" height="1"/><rect x="46" y="701" width="1" height="1"/><rect x="50" y="701" width="1" height="1"/><rect x="46" y="702" width="1" height="1"/><rect x="50" y="702" width="1" height="1"/><rect x="46" y="703" width="1" height="1"/><rect x="50" y="703" width="1" height="1"/><rect x="47" y="704" width="3" height="1"/><rect x="179" y="696" width="3" height="1"/><rect x="178" y="697" width="1" height="1"/><rect x="182" y="697" width="1" height="1"/><rect x="182" y="698" width="1" height="1"/><rect x="182" y="699" width="1" height="1"/><rect x="181" y="700" width="1" height="1"/><rect x="180" y="701" width="1" height="1"/><rect x="179" y="702" width="1" height="1"/><rect x="178" y="703" width="1" height="1"/><rect x="178" y="704" width="5" height="1"/><rect x="185" y="696" width="3" height="1"/><rect x="184" y="697" width="1" height="1"/><rect x="188" y="697" width="1" height="1"/><rect x="184" y="698" width="1" height="1"/><rect x="188" y="698" width="1" height="1"/><rect x="184" y="699" width="1" height="1"/><rect x="188" y="699" width="1" height="1"/><rect x="184" y="700" width="1" height="1"/><rect x="188" y="700" width="1" height="1"/><rect x="184" y="701" width="1" height="1"/><rect x="188" y="701" width="1" height="1"/><rect x="184" y="702" width="1" height="1"/><rect x="188" y="702" width="1" height="1"/><rect x="184" y="703" width="1" height="1"/><rect x="188" y="703" width="1" height="1"/><rect x="185" y="704" width="3" height="1"/><rect x="376" y="696" width="5" height="1"/><rect x="376" y="697" width="1" height="1"/><rect x="376" y="698" width="1" height="1"/><rect x="376" y="699" width="4" height="1"/><rect x="380" y="700" width="1" height="1"/><rect x="380" y="701" width="1" height="1"/><rect x="380" y="702" width="1" height="1"/><rect x="376" y="703" width="1" height="1"/><rect x="380" y="703" width="1" height="1"/><rect x="377" y="704" width="3" height="1"/><rect x="383" y="696" width="3" height="1"/><rect x="382" y="697" width="1" height="1"/><rect x="386" y="697" width="1" height="1"/><rect x="382" y="698" width="1" height="1"/><rect x="386" y="698" width="1" height="1"/><rect x="382" y="699" width="1" height="1"/><rect x="386" y="699" width="1" height="1"/><rect x="382" y="700" width="1" height="1"/><rect x="386" y="700" width="1" height="1"/><rect x="382" y="701" width="1" height="1"/><rect x="386" y="701" width="1" height="1"/><rect x="382" y="702" width="1" height="1"/><rect x="386" y="702" width="1" height="1"/><rect x="382" y="703" width="1" height="1"/><rect x="386" y="703" width="1" height="1"/><rect x="383" y="704" width="3" height="1"/><rect x="524" y="696" width="1" height="1"/><rect x="522" y="697" width="3" height="1"/><rect x="524" y="698" width="1" height="1"/><rect x="524" y="699" width="1" height="1"/><rect x="524" y="700" width="1" height="1"/><rect x="524" y="701" width="1" height="1"/><rect x="524" y="702" width="1" height="1"/><rect x="524" y="703" width="1" height="1"/><rect x="524" y="704" width="1" height="1"/><rect x="529" y="696" width="3" height="1"/><rect x="528" y="697" width="1" height="1"/><rect x="532" y="697" width="1" height="1"/><rect x="528" y="698" width="1" height="1"/><rect x="532" y="698" width="1" height="1"/><rect x="528" y="699" width="1" height="1"/><rect x="532" y="699" width="1" height="1"/><rect x="528" y="700" width="1" height="1"/><rect x="532" y="700" width="1" height="1"/><rect x="528" y="701" width="1" height="1"/><rect x="532" y="701" width="1" height="1"/><rect x="528" y="702" width="1" height="1"/><rect x="532" y="702" width="1" height="1"/><rect x="528" y="703" width="1" height="1"/><rect x="532" y="703" width="1" height="1"/><rect x="529" y="704" width="3" height="1"/><rect x="535" y="696" width="3" height="1"/><rect x="534" y="697" width="1" height="1"/><rect x="538" y="697" width="1" height="1"/><rect x="534" y="698" width="1" height="1"/><rect x="538" y="698" width="1" height="1"/><rect x="534" y="699" width="1" height="1"/><rect x="538" y="699" width="1" height="1"/><rect x="534" y="700" width="1" height="1"/><rect x="538" y="700" width="1" height="1"/><rect x="534" y="701" width="1" height="1"/><rect x="538" y="701" width="1" height="1"/><rect x="534" y="702" width="1" height="1"/><rect x="538" y="702" width="1" height="1"/><rect x="534" y="703" width="1" height="1"/><rect x="538" y="703" width="1" height="1"/><rect x="535" y="704" width="3" height="1"/><rect x="659" y="696" width="3" height="1"/><rect x="658" y="697" width="1" height="1"/><rect x="662" y="697" width="1" height="1"/><rect x="662" y="698" width="1" height="1"/><rect x="662" y="699" width="1" height="1"/><rect x="661" y="700" width="1" height="1"/><rect x="660" y="701" width="1" height="1"/><rect x="659" y="702" width="1" height="1"/><rect x="658" y="703" width="1" height="1"/><rect x="658" y="704" width="5" height="1"/><rect x="665" y="696" width="3" height="1"/><rect x="664" y="697" width="1" height="1"/><rect x="668" y="697" width="1" height="1"/><rect x="664" y="698" width="1" height="1"/><rect x="668" y="698" width="1" height="1"/><rect x="664" y="699" width="1" height="1"/><rect x="668" y="699" width="1" height="1"/><rect x="664" y="700" width="1" height="1"/><rect x="668" y="700" width="1" height="1"/><rect x="664" y="701" width="1" height="1"/><rect x="668" y="701" width="1" height="1"/><rect x="664" y="702" width="1" height="1"/><rect x="668" y="702" width="1" height="1"/><rect x="664" y="703" width="1" height="1"/><rect x="668" y="703" width="1" height="1"/><rect x="665" y="704" width="3" height="1"/><rect x="671" y="696" width="3" height="1"/><rect x="670" y="697" width="1" height="1"/><rect x="674" y="697" width="1" height="1"/><rect x="670" y="698" width="1" height="1"/><rect x="674" y="698" width="1" height="1"/><rect x="670" y="699" width="1" height="1"/><rect x="674" y="699" width="1" height="1"/><rect x="670" y="700" width="1" height="1"/><rect x="674" y="700" width="1" height="1"/><rect x="670" y="701" width="1" height="1"/><rect x="674" y="701" width="1" height="1"/><rect x="670" y="702" width="1" height="1"/><rect x="674" y="702" width="1" height="1"/><rect x="670" y="703" width="1" height="1"/><rect x="674" y="703" width="1" height="1"/><rect x="671" y="704" width="3" height="1"/></g></svg></div></div>
<div class="b" style="left:564px;top:111px;width:401px;height:257px;border-radius:7px 7px 0 0;background:#0747D6"></div><div class="b" style="left:564px;top:111px;width:401px;height:257px;border-radius:7px 7px 0 0;background:linear-gradient(to right,#0A52E0 0,#0747D6 3px,#0747D6 397px,#0A3ABF 401px)"></div><div class="b" style="left:564px;top:364px;width:401px;height:4px;background:linear-gradient(to bottom,#0747D6,#0737B0)"></div><div class="b" style="left:564px;top:111px;width:401px;height:29px;border-radius:7px 7px 0 0;background:linear-gradient(to bottom,#2858C0 0px,#3E96FF 1px,#3890FC 2px,#1670EE 3px,#0A5EE8 5px,#0056E4 7px,#0055E2 16px,#005CF0 19px,#0063F6 22px,#0866F2 26px,#0452D4 27px,#003AA8 29px)"></div><svg class="b" style="left:572px;top:119px" width="9" height="13" shape-rendering="crispEdges"><rect x="0" y="0" width="9" height="1" fill="#000"/><rect x="0" y="1" width="1" height="1" fill="#000"/><rect x="1" y="1" width="1" height="1" fill="#7a7a7a"/><rect x="2" y="1" width="1" height="1" fill="#fff"/><rect x="3" y="1" width="1" height="1" fill="#7a7a7a"/><rect x="4" y="1" width="1" height="1" fill="#fff"/><rect x="5" y="1" width="1" height="1" fill="#7a7a7a"/><rect x="6" y="1" width="2" height="1" fill="#fff"/><rect x="8" y="1" width="1" height="1" fill="#000"/><rect x="0" y="2" width="1" height="1" fill="#000"/><rect x="1" y="2" width="1" height="1" fill="#fff"/><rect x="2" y="2" width="1" height="1" fill="#7a7a7a"/><rect x="3" y="2" width="1" height="1" fill="#fff"/><rect x="4" y="2" width="1" height="1" fill="#7a7a7a"/><rect x="5" y="2" width="4" height="1" fill="#000"/><rect x="0" y="3" width="1" height="1" fill="#000"/><rect x="1" y="3" width="1" height="1" fill="#7a7a7a"/><rect x="2" y="3" width="1" height="1" fill="#fff"/><rect x="3" y="3" width="1" height="1" fill="#7a7a7a"/><rect x="4" y="3" width="1" height="1" fill="#fff"/><rect x="5" y="3" width="4" height="1" fill="#000"/><rect x="0" y="4" width="1" height="1" fill="#000"/><rect x="1" y="4" width="1" height="1" fill="#fff"/><rect x="2" y="4" width="1" height="1" fill="#7a7a7a"/><rect x="3" y="4" width="1" height="1" fill="#fff"/><rect x="4" y="4" width="1" height="1" fill="#7a7a7a"/><rect x="5" y="4" width="4" height="1" fill="#000"/><rect x="0" y="5" width="1" height="1" fill="#000"/><rect x="1" y="5" width="1" height="1" fill="#7a7a7a"/><rect x="2" y="5" width="1" height="1" fill="#fff"/><rect x="3" y="5" width="1" height="1" fill="#7a7a7a"/><rect x="4" y="5" width="1" height="1" fill="#fff"/><rect x="5" y="5" width="4" height="1" fill="#000"/><rect x="0" y="6" width="1" height="1" fill="#000"/><rect x="1" y="6" width="1" height="1" fill="#fff"/><rect x="2" y="6" width="1" height="1" fill="#7a7a7a"/><rect x="3" y="6" width="1" height="1" fill="#fff"/><rect x="4" y="6" width="1" height="1" fill="#7a7a7a"/><rect x="5" y="6" width="4" height="1" fill="#000"/><rect x="0" y="7" width="1" height="1" fill="#000"/><rect x="1" y="7" width="1" height="1" fill="#7a7a7a"/><rect x="2" y="7" width="1" height="1" fill="#fff"/><rect x="3" y="7" width="1" height="1" fill="#7a7a7a"/><rect x="4" y="7" width="1" height="1" fill="#fff"/><rect x="5" y="7" width="4" height="1" fill="#000"/><rect x="0" y="8" width="1" height="1" fill="#000"/><rect x="1" y="8" width="1" height="1" fill="#fff"/><rect x="2" y="8" width="1" height="1" fill="#7a7a7a"/><rect x="3" y="8" width="1" height="1" fill="#fff"/><rect x="4" y="8" width="1" height="1" fill="#7a7a7a"/><rect x="5" y="8" width="4" height="1" fill="#000"/><rect x="0" y="9" width="1" height="1" fill="#000"/><rect x="1" y="9" width="1" height="1" fill="#7a7a7a"/><rect x="2" y="9" width="1" height="1" fill="#fff"/><rect x="3" y="9" width="1" height="1" fill="#7a7a7a"/><rect x="4" y="9" width="4" height="1" fill="#fff"/><rect x="8" y="9" width="1" height="1" fill="#000"/><rect x="0" y="10" width="1" height="1" fill="#000"/><rect x="1" y="10" width="1" height="1" fill="#fff"/><rect x="2" y="10" width="1" height="1" fill="#7a7a7a"/><rect x="3" y="10" width="1" height="1" fill="#fff"/><rect x="4" y="10" width="5" height="1" fill="#000"/><rect x="0" y="11" width="1" height="1" fill="#000"/><rect x="1" y="11" width="1" height="1" fill="#7a7a7a"/><rect x="2" y="11" width="1" height="1" fill="#fff"/><rect x="3" y="11" width="1" height="1" fill="#7a7a7a"/><rect x="4" y="11" width="4" height="1" fill="#fff"/><rect x="8" y="11" width="1" height="1" fill="#000"/><rect x="0" y="12" width="9" height="1" fill="#000"/></svg><div class="t" style="left:588.5px;top:121.07px;font-size:13.5px;line-height:13.5px;font-weight:bold;color:#fff;text-shadow:1px 1px 0 #0A2C8C;letter-spacing:-0.3px">[1]Vented : SPL Dynamics PRO-12D2</div><div class="b" style="left:893px;top:116px;width:19px;height:19px;border-radius:3px;background:linear-gradient(135deg,#5A9BFF 0%,#2C6EF0 35%,#1C58E0 70%,#1B4FD0 100%);border:1px solid #fff;"></div><div class="b" style="left:898px;top:129px;width:7px;height:3px;background:#fff"></div><div class="b" style="left:916px;top:116px;width:19px;height:19px;border-radius:3px;background:linear-gradient(135deg,#5A9BFF 0%,#2C6EF0 35%,#1C58E0 70%,#1B4FD0 100%);border:1px solid #fff;"></div><div class="b" style="left:921px;top:121px;width:9px;height:8px;border:1px solid #fff;border-top-width:3px;opacity:0.45"></div><div class="b" style="left:939px;top:116px;width:19px;height:19px;border-radius:3px;background:linear-gradient(135deg,#F0946C 0%,#E35F32 40%,#D0441C 100%);border:1px solid #fff;"></div><svg class="b" style="left:939px;top:116px" width="21" height="21"><path d="M6 6 L15 15 M15 6 L6 15" stroke="#fff" stroke-width="2.2" stroke-linecap="square"/></svg><div class="b" style="left:567px;top:140px;width:395px;height:225px;background:#ECE9D8"></div><div class="b" style="left:567px;top:140px;width:395px;height:1px;background:#fff"></div><div class="b" style="left:567px;top:140px;width:1px;height:225px;background:#fff"></div><div class="b" style="left:570px;top:142px;width:40px;height:19px;background:#ECE9D8;border-top:1px solid #fff;border-left:1px solid #fff;border-right:1px solid #716F64;width:38px;height:18px"></div><div class="t" style="left:575px;top:147.29px;font-size:11px;line-height:11px;font-weight:normal;color:#000;">Driver</div><div class="b" style="left:655px;top:142px;width:39px;height:19px;background:#ECE9D8;border-top:1px solid #fff;border-left:1px solid #fff;border-right:1px solid #716F64;width:37px;height:18px"></div><div class="t" style="left:658px;top:147.29px;font-size:11px;line-height:11px;font-weight:normal;color:#000;">Vents</div><div class="b" style="left:694px;top:142px;width:42px;height:19px;background:#ECE9D8;border-top:1px solid #fff;border-left:1px solid #fff;border-right:1px solid #716F64;width:40px;height:18px"></div><div class="t" style="left:701px;top:147.29px;font-size:11px;line-height:11px;font-weight:normal;color:#000;">Plot</div><div class="b" style="left:736px;top:142px;width:43px;height:19px;background:#ECE9D8;border-top:1px solid #fff;border-left:1px solid #fff;border-right:1px solid #716F64;width:41px;height:18px"></div><div class="t" style="left:742px;top:147.29px;font-size:11px;line-height:11px;font-weight:normal;color:#000;">Signal</div><div class="b" style="left:779px;top:142px;width:54px;height:19px;background:#ECE9D8;border-top:1px solid #fff;border-left:1px solid #fff;border-right:1px solid #716F64;width:52px;height:18px"></div><div class="t" style="left:785px;top:147.29px;font-size:11px;line-height:11px;font-weight:normal;color:#000;">EQ/Filter</div><div class="b" style="left:833px;top:142px;width:45px;height:19px;background:#ECE9D8;border-top:1px solid #fff;border-left:1px solid #fff;border-right:1px solid #716F64;width:43px;height:18px"></div><div class="t" style="left:839px;top:147.29px;font-size:11px;line-height:11px;font-weight:normal;color:#000;">Project</div><div class="b" style="left:567px;top:160px;width:395px;height:1px;background:#fff"></div><div class="b" style="left:608px;top:140px;width:47px;height:22px;background:#ECE9D8;border-top:1px solid #fff;border-left:1px solid #fff;border-right:1px solid #716F64;width:45px;height:21px"></div><div class="t" style="left:617px;top:144.89px;font-size:11px;line-height:11px;font-weight:normal;color:#000;">Box</div><div class="b" style="left:567px;top:349px;width:395px;height:1px;background:#ACA899"></div><div class="b" style="left:961px;top:160px;width:1px;height:190px;background:#ACA899"></div><div class="b" style="left:576px;top:168px;width:302px;height:17px;background:#ECE9D8;border-top:1px solid #ACA899;border-left:1px solid #ACA899;border-right:1px solid #fff;border-bottom:1px solid #fff;width:300px;height:15px"></div><div class="t" style="left:576px;top:171.69px;font-size:11px;line-height:11px;font-weight:normal;color:#000;letter-spacing:0.6px">Vented</div><div class="b" style="left:881px;top:168px;width:72px;height:18px;border-top:1px solid #ACA899;border-left:1px solid #ACA899;border-right:1px solid #fff;border-bottom:1px solid #fff;width:70px;height:16px"></div><div class="b" style="left:883px;top:170px;width:69px;height:15px;border:1px solid #000;width:67px;height:13px;background:#F4F3EE"></div><div class="b" style="left:884px;top:171px;width:67px;height:13px;border-top:1px solid #fff;border-left:1px solid #fff;border-right:1px solid #ACA899;border-bottom:1px solid #ACA899;width:65px;height:11px"></div><div class="t" style="left:892px;top:171.29px;font-size:11px;line-height:11px;font-weight:normal;color:#000;">Box shape</div><div class="b" style="left:887px;top:173px;width:62px;height:9px;border:1px dotted #000;width:60px;height:7px"></div><div class="b" style="left:576px;top:189px;width:106px;height:16px;background:#ECE9D8;border-top:1px solid #fff;border-left:1px solid #fff;border-right:1px solid #ACA899;border-bottom:1px solid #ACA899;width:104px;height:14px"></div><div class="t" style="left:595px;top:192.09px;font-size:11px;line-height:11px;font-weight:normal;color:#000;">Rear chamber</div><div class="b" style="left:686px;top:189px;width:101px;height:16px;background:#ECE9D8;border-top:1px solid #fff;border-left:1px solid #fff;border-right:1px solid #ACA899;border-bottom:1px solid #ACA899;width:99px;height:14px"></div><div class="t" style="left:702px;top:192.09px;font-size:11px;line-height:11px;font-weight:normal;color:#000;letter-spacing:-0.25px">Front chamber</div><div class="b" style="left:576px;top:209px;width:106px;height:136px;border-top:1px solid #ACA899;border-left:1px solid #ACA899;border-right:1px solid #fff;border-bottom:1px solid #fff;width:104px;height:134px"></div><div class="t" style="left:580px;top:215.69px;font-size:11px;line-height:11px;font-weight:normal;color:#0C1494;">Volume:</div><div class="b" style="left:581px;top:229px;width:66px;height:19px;background:#fff;border:1px solid #ACA899;width:64px;height:17px"></div><div class="t" style="left:583.5px;top:233.69px;font-size:11px;line-height:11px;font-weight:normal;color:#000;letter-spacing:0.5px">100,00</div><div class="t" style="left:651.5px;top:238.69px;font-size:11px;line-height:11px;font-weight:normal;color:#000;">l</div><div class="t" style="left:582.5px;top:250.69px;font-size:11px;line-height:11px;font-weight:normal;color:#0C1494;">Tuning freq.</div><div class="b" style="left:581px;top:264px;width:66px;height:19px;background:#fff;border:1px solid #ACA899;width:64px;height:17px"></div><div class="t" style="left:583.2px;top:268.69px;font-size:11px;line-height:11px;font-weight:normal;color:#000;">30</div><div class="t" style="left:651.5px;top:273.69px;font-size:11px;line-height:11px;font-weight:normal;color:#000;">Hz</div><div class="t" style="left:600px;top:328.29px;font-size:11px;line-height:11px;font-weight:normal;color:#000;">Advanced-&gt;</div><svg class="b" style="left:791px;top:193px" width="72" height="96"><rect x="1" y="1" width="70" height="93" fill="#fff" stroke="#000" stroke-width="2"/><clipPath id="cl111"><rect x="2" y="2" width="68" height="91"/></clipPath><g clip-path="url(#cl111)"><rect x="50" y="21" width="7" height="31" rx="3" fill="#000"/><path d="M55 30 L64 17 Q68 12 71 13 V58 Q68 59 64 54 L55 42 z" fill="#000"/><path d="M64 26.5 l1.5 -2 M64.5 36 h1.5 M64 46 l1.5 2" stroke="#fff" stroke-width="1.3"/></g><rect x="33" y="70" width="38" height="2" fill="#000"/><rect x="33" y="85" width="38" height="2" fill="#000"/></svg><div class="b" style="left:567px;top:350px;width:395px;height:1px;background:#fff"></div><div class="b" style="left:567px;top:351px;width:155px;height:13px;background:#ECE9D8"></div><div class="b" style="left:722px;top:351px;width:240px;height:13px;background:#C8C8C4"></div><svg class="b" style="left:620px;top:355px" width="5" height="6" shape-rendering="crispEdges"><rect x="0" y="0" width="4" height="1" fill="#000"/><rect x="1" y="1" width="2" height="1" fill="#000"/><rect x="4" y="1" width="1" height="1" fill="#000"/><rect x="1" y="2" width="2" height="1" fill="#000"/><rect x="4" y="2" width="1" height="1" fill="#000"/><rect x="1" y="3" width="3" height="1" fill="#000"/><rect x="1" y="4" width="2" height="1" fill="#000"/><rect x="0" y="5" width="4" height="1" fill="#000"/></svg><svg class="b" style="left:626px;top:355px" width="4" height="6" shape-rendering="crispEdges"><rect x="0" y="2" width="3" height="1" fill="#000"/><rect x="2" y="3" width="2" height="1" fill="#000"/><rect x="1" y="4" width="3" height="1" fill="#000"/><rect x="0" y="5" width="4" height="1" fill="#000"/></svg><svg class="b" style="left:631px;top:355px" width="4" height="6" shape-rendering="crispEdges"><rect x="0" y="2" width="4" height="1" fill="#000"/><rect x="1" y="3" width="3" height="1" fill="#000"/><rect x="1" y="4" width="2" height="1" fill="#000"/><rect x="0" y="5" width="3" height="1" fill="#000"/></svg><svg class="b" style="left:635px;top:355px" width="4" height="6" shape-rendering="crispEdges"><rect x="0" y="2" width="3" height="1" fill="#000"/><rect x="2" y="3" width="2" height="1" fill="#000"/><rect x="1" y="4" width="3" height="1" fill="#000"/><rect x="0" y="5" width="4" height="1" fill="#000"/></svg><svg class="b" style="left:640px;top:355px" width="6" height="6" shape-rendering="crispEdges"><rect x="0" y="2" width="6" height="1" fill="#000"/><rect x="1" y="3" width="5" height="1" fill="#000"/><rect x="1" y="4" width="2" height="1" fill="#000"/><rect x="4" y="4" width="2" height="1" fill="#000"/><rect x="0" y="5" width="3" height="1" fill="#000"/><rect x="4" y="5" width="2" height="1" fill="#000"/></svg><svg class="b" style="left:647px;top:355px" width="4" height="6" shape-rendering="crispEdges"><rect x="1" y="2" width="3" height="1" fill="#000"/><rect x="0" y="3" width="4" height="1" fill="#000"/><rect x="0" y="4" width="2" height="1" fill="#000"/><rect x="1" y="5" width="3" height="1" fill="#000"/></svg><svg class="b" style="left:651px;top:355px" width="4" height="6" shape-rendering="crispEdges"><rect x="1" y="1" width="2" height="1" fill="#000"/><rect x="0" y="2" width="4" height="1" fill="#000"/><rect x="1" y="3" width="2" height="1" fill="#000"/><rect x="1" y="4" width="2" height="1" fill="#000"/><rect x="2" y="5" width="2" height="1" fill="#000"/></svg><svg class="b" style="left:656px;top:355px" width="4" height="6" shape-rendering="crispEdges"><rect x="1" y="2" width="3" height="1" fill="#000"/><rect x="0" y="3" width="4" height="1" fill="#000"/><rect x="0" y="4" width="2" height="1" fill="#000"/><rect x="1" y="5" width="3" height="1" fill="#000"/></svg><svg class="b" style="left:661px;top:355px" width="4" height="6" shape-rendering="crispEdges"><rect x="0" y="2" width="4" height="1" fill="#000"/><rect x="1" y="3" width="3" height="1" fill="#000"/><rect x="1" y="4" width="2" height="1" fill="#000"/><rect x="0" y="5" width="3" height="1" fill="#000"/></svg><svg class="b" style="left:665px;top:355px" width="4" height="6" shape-rendering="crispEdges"><rect x="1" y="2" width="3" height="1" fill="#000"/><rect x="0" y="3" width="2" height="1" fill="#000"/><rect x="2" y="4" width="2" height="1" fill="#000"/><rect x="0" y="5" width="3" height="1" fill="#000"/></svg>
<div class="b" style="left:564px;top:431px;width:401px;height:257px;border-radius:7px 7px 0 0;background:#7C90E0"></div><div class="b" style="left:564px;top:684px;width:401px;height:4px;background:linear-gradient(to bottom,#8093E2,#6B7DD4)"></div><div class="b" style="left:564px;top:431px;width:401px;height:29px;border-radius:7px 7px 0 0;background:linear-gradient(to bottom,#5E72AC 0px,#9CB6F2 1px,#96B0EE 3px,#7E98E2 6px,#7890DE 14px,#7A9CE4 19px,#7AA4E8 26px,#7486E0 28px,#7080E0 29px)"></div><svg class="b" style="left:572px;top:439px" width="9" height="13" shape-rendering="crispEdges"><rect x="0" y="0" width="9" height="1" fill="#000"/><rect x="0" y="1" width="1" height="1" fill="#000"/><rect x="1" y="1" width="1" height="1" fill="#7a7a7a"/><rect x="2" y="1" width="1" height="1" fill="#fff"/><rect x="3" y="1" width="1" height="1" fill="#7a7a7a"/><rect x="4" y="1" width="1" height="1" fill="#fff"/><rect x="5" y="1" width="1" height="1" fill="#7a7a7a"/><rect x="6" y="1" width="2" height="1" fill="#fff"/><rect x="8" y="1" width="1" height="1" fill="#000"/><rect x="0" y="2" width="1" height="1" fill="#000"/><rect x="1" y="2" width="1" height="1" fill="#fff"/><rect x="2" y="2" width="1" height="1" fill="#7a7a7a"/><rect x="3" y="2" width="1" height="1" fill="#fff"/><rect x="4" y="2" width="1" height="1" fill="#7a7a7a"/><rect x="5" y="2" width="4" height="1" fill="#000"/><rect x="0" y="3" width="1" height="1" fill="#000"/><rect x="1" y="3" width="1" height="1" fill="#7a7a7a"/><rect x="2" y="3" width="1" height="1" fill="#fff"/><rect x="3" y="3" width="1" height="1" fill="#7a7a7a"/><rect x="4" y="3" width="1" height="1" fill="#fff"/><rect x="5" y="3" width="4" height="1" fill="#000"/><rect x="0" y="4" width="1" height="1" fill="#000"/><rect x="1" y="4" width="1" height="1" fill="#fff"/><rect x="2" y="4" width="1" height="1" fill="#7a7a7a"/><rect x="3" y="4" width="1" height="1" fill="#fff"/><rect x="4" y="4" width="1" height="1" fill="#7a7a7a"/><rect x="5" y="4" width="4" height="1" fill="#000"/><rect x="0" y="5" width="1" height="1" fill="#000"/><rect x="1" y="5" width="1" height="1" fill="#7a7a7a"/><rect x="2" y="5" width="1" height="1" fill="#fff"/><rect x="3" y="5" width="1" height="1" fill="#7a7a7a"/><rect x="4" y="5" width="1" height="1" fill="#fff"/><rect x="5" y="5" width="4" height="1" fill="#000"/><rect x="0" y="6" width="1" height="1" fill="#000"/><rect x="1" y="6" width="1" height="1" fill="#fff"/><rect x="2" y="6" width="1" height="1" fill="#7a7a7a"/><rect x="3" y="6" width="1" height="1" fill="#fff"/><rect x="4" y="6" width="1" height="1" fill="#7a7a7a"/><rect x="5" y="6" width="4" height="1" fill="#000"/><rect x="0" y="7" width="1" height="1" fill="#000"/><rect x="1" y="7" width="1" height="1" fill="#7a7a7a"/><rect x="2" y="7" width="1" height="1" fill="#fff"/><rect x="3" y="7" width="1" height="1" fill="#7a7a7a"/><rect x="4" y="7" width="1" height="1" fill="#fff"/><rect x="5" y="7" width="4" height="1" fill="#000"/><rect x="0" y="8" width="1" height="1" fill="#000"/><rect x="1" y="8" width="1" height="1" fill="#fff"/><rect x="2" y="8" width="1" height="1" fill="#7a7a7a"/><rect x="3" y="8" width="1" height="1" fill="#fff"/><rect x="4" y="8" width="1" height="1" fill="#7a7a7a"/><rect x="5" y="8" width="4" height="1" fill="#000"/><rect x="0" y="9" width="1" height="1" fill="#000"/><rect x="1" y="9" width="1" height="1" fill="#7a7a7a"/><rect x="2" y="9" width="1" height="1" fill="#fff"/><rect x="3" y="9" width="1" height="1" fill="#7a7a7a"/><rect x="4" y="9" width="4" height="1" fill="#fff"/><rect x="8" y="9" width="1" height="1" fill="#000"/><rect x="0" y="10" width="1" height="1" fill="#000"/><rect x="1" y="10" width="1" height="1" fill="#fff"/><rect x="2" y="10" width="1" height="1" fill="#7a7a7a"/><rect x="3" y="10" width="1" height="1" fill="#fff"/><rect x="4" y="10" width="5" height="1" fill="#000"/><rect x="0" y="11" width="1" height="1" fill="#000"/><rect x="1" y="11" width="1" height="1" fill="#7a7a7a"/><rect x="2" y="11" width="1" height="1" fill="#fff"/><rect x="3" y="11" width="1" height="1" fill="#7a7a7a"/><rect x="4" y="11" width="4" height="1" fill="#fff"/><rect x="8" y="11" width="1" height="1" fill="#000"/><rect x="0" y="12" width="9" height="1" fill="#000"/></svg><div class="t" style="left:588.5px;top:441.07px;font-size:13.5px;line-height:13.5px;font-weight:bold;color:#D9E3F8;letter-spacing:-0.3px">[2]Vented : Peerless SLS 315 (830669)</div><div class="b" style="left:893px;top:436px;width:19px;height:19px;border-radius:3px;background:linear-gradient(135deg,#8CA6F2 0%,#6A88E8 50%,#5A78E0 100%);border:1px solid #C8D3F5;"></div><div class="b" style="left:898px;top:449px;width:7px;height:3px;background:#E6ECFA"></div><div class="b" style="left:916px;top:436px;width:19px;height:19px;border-radius:3px;background:linear-gradient(135deg,#8CA6F2 0%,#6A88E8 50%,#5A78E0 100%);border:1px solid #C8D3F5;"></div><div class="b" style="left:921px;top:441px;width:9px;height:8px;border:1px solid #E6ECFA;border-top-width:3px;opacity:0.45"></div><div class="b" style="left:939px;top:436px;width:19px;height:19px;border-radius:3px;background:linear-gradient(135deg,#D89090 0%,#C07078 50%,#B05868 100%);border:1px solid #D8D0EC;"></div><svg class="b" style="left:939px;top:436px" width="21" height="21"><path d="M6 6 L15 15 M15 6 L6 15" stroke="#E6ECFA" stroke-width="2.2" stroke-linecap="square"/></svg><div class="b" style="left:567px;top:460px;width:395px;height:225px;background:#ECE9D8"></div><div class="b" style="left:567px;top:460px;width:395px;height:1px;background:#fff"></div><div class="b" style="left:567px;top:460px;width:1px;height:225px;background:#fff"></div><div class="b" style="left:570px;top:462px;width:40px;height:19px;background:#ECE9D8;border-top:1px solid #fff;border-left:1px solid #fff;border-right:1px solid #716F64;width:38px;height:18px"></div><div class="t" style="left:575px;top:467.29px;font-size:11px;line-height:11px;font-weight:normal;color:#000;">Driver</div><div class="b" style="left:655px;top:462px;width:39px;height:19px;background:#ECE9D8;border-top:1px solid #fff;border-left:1px solid #fff;border-right:1px solid #716F64;width:37px;height:18px"></div><div class="t" style="left:658px;top:467.29px;font-size:11px;line-height:11px;font-weight:normal;color:#000;">Vents</div><div class="b" style="left:694px;top:462px;width:42px;height:19px;background:#ECE9D8;border-top:1px solid #fff;border-left:1px solid #fff;border-right:1px solid #716F64;width:40px;height:18px"></div><div class="t" style="left:701px;top:467.29px;font-size:11px;line-height:11px;font-weight:normal;color:#000;">Plot</div><div class="b" style="left:736px;top:462px;width:43px;height:19px;background:#ECE9D8;border-top:1px solid #fff;border-left:1px solid #fff;border-right:1px solid #716F64;width:41px;height:18px"></div><div class="t" style="left:742px;top:467.29px;font-size:11px;line-height:11px;font-weight:normal;color:#000;">Signal</div><div class="b" style="left:779px;top:462px;width:54px;height:19px;background:#ECE9D8;border-top:1px solid #fff;border-left:1px solid #fff;border-right:1px solid #716F64;width:52px;height:18px"></div><div class="t" style="left:785px;top:467.29px;font-size:11px;line-height:11px;font-weight:normal;color:#000;">EQ/Filter</div><div class="b" style="left:833px;top:462px;width:45px;height:19px;background:#ECE9D8;border-top:1px solid #fff;border-left:1px solid #fff;border-right:1px solid #716F64;width:43px;height:18px"></div><div class="t" style="left:839px;top:467.29px;font-size:11px;line-height:11px;font-weight:normal;color:#000;">Project</div><div class="b" style="left:567px;top:480px;width:395px;height:1px;background:#fff"></div><div class="b" style="left:608px;top:460px;width:47px;height:22px;background:#ECE9D8;border-top:1px solid #fff;border-left:1px solid #fff;border-right:1px solid #716F64;width:45px;height:21px"></div><div class="t" style="left:617px;top:464.89px;font-size:11px;line-height:11px;font-weight:normal;color:#000;">Box</div><div class="b" style="left:567px;top:669px;width:395px;height:1px;background:#ACA899"></div><div class="b" style="left:961px;top:480px;width:1px;height:190px;background:#ACA899"></div><div class="b" style="left:576px;top:488px;width:302px;height:17px;background:#ECE9D8;border-top:1px solid #ACA899;border-left:1px solid #ACA899;border-right:1px solid #fff;border-bottom:1px solid #fff;width:300px;height:15px"></div><div class="t" style="left:576px;top:491.69px;font-size:11px;line-height:11px;font-weight:normal;color:#000;letter-spacing:0.6px">Vented</div><div class="b" style="left:881px;top:488px;width:72px;height:18px;border-top:1px solid #ACA899;border-left:1px solid #ACA899;border-right:1px solid #fff;border-bottom:1px solid #fff;width:70px;height:16px"></div><div class="b" style="left:882px;top:489px;width:70px;height:16px;border-top:1px solid #fff;border-left:1px solid #fff;border-right:1px solid #716F64;border-bottom:1px solid #716F64;width:68px;height:14px;background:#ECE9D8"></div><div class="b" style="left:883px;top:503px;width:68px;height:1px;background:#ACA899"></div><div class="b" style="left:950px;top:490px;width:1px;height:14px;background:#ACA899"></div><div class="t" style="left:892px;top:492.09px;font-size:11px;line-height:11px;font-weight:normal;color:#000;">Box shape</div><div class="b" style="left:576px;top:509px;width:106px;height:16px;background:#ECE9D8;border-top:1px solid #fff;border-left:1px solid #fff;border-right:1px solid #ACA899;border-bottom:1px solid #ACA899;width:104px;height:14px"></div><div class="t" style="left:595px;top:512.09px;font-size:11px;line-height:11px;font-weight:normal;color:#000;">Rear chamber</div><div class="b" style="left:686px;top:509px;width:101px;height:16px;background:#ECE9D8;border-top:1px solid #fff;border-left:1px solid #fff;border-right:1px solid #ACA899;border-bottom:1px solid #ACA899;width:99px;height:14px"></div><div class="t" style="left:702px;top:512.09px;font-size:11px;line-height:11px;font-weight:normal;color:#000;letter-spacing:-0.25px">Front chamber</div><div class="b" style="left:576px;top:529px;width:106px;height:136px;border-top:1px solid #ACA899;border-left:1px solid #ACA899;border-right:1px solid #fff;border-bottom:1px solid #fff;width:104px;height:134px"></div><div class="t" style="left:580px;top:535.69px;font-size:11px;line-height:11px;font-weight:normal;color:#0C1494;">Volume:</div><div class="b" style="left:581px;top:549px;width:66px;height:19px;background:#fff;border:1px solid #ACA899;width:64px;height:17px"></div><div class="t" style="left:583.5px;top:553.69px;font-size:11px;line-height:11px;font-weight:normal;color:#000;letter-spacing:0.5px">100,00</div><div class="t" style="left:651.5px;top:558.69px;font-size:11px;line-height:11px;font-weight:normal;color:#000;">l</div><div class="t" style="left:582.5px;top:570.69px;font-size:11px;line-height:11px;font-weight:normal;color:#0C1494;">Tuning freq.</div><div class="b" style="left:581px;top:584px;width:66px;height:19px;background:#fff;border:1px solid #ACA899;width:64px;height:17px"></div><div class="t" style="left:583.2px;top:588.69px;font-size:11px;line-height:11px;font-weight:normal;color:#000;">30</div><div class="t" style="left:651.5px;top:593.69px;font-size:11px;line-height:11px;font-weight:normal;color:#000;">Hz</div><div class="t" style="left:600px;top:648.29px;font-size:11px;line-height:11px;font-weight:normal;color:#000;">Advanced-&gt;</div><svg class="b" style="left:791px;top:513px" width="72" height="96"><rect x="1" y="1" width="70" height="93" fill="#fff" stroke="#000" stroke-width="2"/><clipPath id="cl431"><rect x="2" y="2" width="68" height="91"/></clipPath><g clip-path="url(#cl431)"><rect x="50" y="21" width="7" height="31" rx="3" fill="#000"/><path d="M55 30 L64 17 Q68 12 71 13 V58 Q68 59 64 54 L55 42 z" fill="#000"/><path d="M64 26.5 l1.5 -2 M64.5 36 h1.5 M64 46 l1.5 2" stroke="#fff" stroke-width="1.3"/></g><rect x="33" y="70" width="38" height="2" fill="#000"/><rect x="33" y="85" width="38" height="2" fill="#000"/></svg><div class="b" style="left:567px;top:670px;width:395px;height:1px;background:#fff"></div><div class="b" style="left:567px;top:671px;width:155px;height:13px;background:#ECE9D8"></div><div class="b" style="left:722px;top:671px;width:240px;height:13px;background:#F4884C"></div><svg class="b" style="left:620px;top:675px" width="5" height="6" shape-rendering="crispEdges"><rect x="0" y="0" width="4" height="1" fill="#000"/><rect x="1" y="1" width="2" height="1" fill="#000"/><rect x="4" y="1" width="1" height="1" fill="#000"/><rect x="1" y="2" width="2" height="1" fill="#000"/><rect x="4" y="2" width="1" height="1" fill="#000"/><rect x="1" y="3" width="3" height="1" fill="#000"/><rect x="1" y="4" width="2" height="1" fill="#000"/><rect x="0" y="5" width="4" height="1" fill="#000"/></svg><svg class="b" style="left:626px;top:675px" width="4" height="6" shape-rendering="crispEdges"><rect x="0" y="2" width="3" height="1" fill="#000"/><rect x="2" y="3" width="2" height="1" fill="#000"/><rect x="1" y="4" width="3" height="1" fill="#000"/><rect x="0" y="5" width="4" height="1" fill="#000"/></svg><svg class="b" style="left:631px;top:675px" width="4" height="6" shape-rendering="crispEdges"><rect x="0" y="2" width="4" height="1" fill="#000"/><rect x="1" y="3" width="3" height="1" fill="#000"/><rect x="1" y="4" width="2" height="1" fill="#000"/><rect x="0" y="5" width="3" height="1" fill="#000"/></svg><svg class="b" style="left:635px;top:675px" width="4" height="6" shape-rendering="crispEdges"><rect x="0" y="2" width="3" height="1" fill="#000"/><rect x="2" y="3" width="2" height="1" fill="#000"/><rect x="1" y="4" width="3" height="1" fill="#000"/><rect x="0" y="5" width="4" height="1" fill="#000"/></svg><svg class="b" style="left:640px;top:675px" width="6" height="6" shape-rendering="crispEdges"><rect x="0" y="2" width="6" height="1" fill="#000"/><rect x="1" y="3" width="5" height="1" fill="#000"/><rect x="1" y="4" width="2" height="1" fill="#000"/><rect x="4" y="4" width="2" height="1" fill="#000"/><rect x="0" y="5" width="3" height="1" fill="#000"/><rect x="4" y="5" width="2" height="1" fill="#000"/></svg><svg class="b" style="left:647px;top:675px" width="4" height="6" shape-rendering="crispEdges"><rect x="1" y="2" width="3" height="1" fill="#000"/><rect x="0" y="3" width="4" height="1" fill="#000"/><rect x="0" y="4" width="2" height="1" fill="#000"/><rect x="1" y="5" width="3" height="1" fill="#000"/></svg><svg class="b" style="left:651px;top:675px" width="4" height="6" shape-rendering="crispEdges"><rect x="1" y="1" width="2" height="1" fill="#000"/><rect x="0" y="2" width="4" height="1" fill="#000"/><rect x="1" y="3" width="2" height="1" fill="#000"/><rect x="1" y="4" width="2" height="1" fill="#000"/><rect x="2" y="5" width="2" height="1" fill="#000"/></svg><svg class="b" style="left:656px;top:675px" width="4" height="6" shape-rendering="crispEdges"><rect x="1" y="2" width="3" height="1" fill="#000"/><rect x="0" y="3" width="4" height="1" fill="#000"/><rect x="0" y="4" width="2" height="1" fill="#000"/><rect x="1" y="5" width="3" height="1" fill="#000"/></svg><svg class="b" style="left:661px;top:675px" width="4" height="6" shape-rendering="crispEdges"><rect x="0" y="2" width="4" height="1" fill="#000"/><rect x="1" y="3" width="3" height="1" fill="#000"/><rect x="1" y="4" width="2" height="1" fill="#000"/><rect x="0" y="5" width="3" height="1" fill="#000"/></svg><svg class="b" style="left:665px;top:675px" width="4" height="6" shape-rendering="crispEdges"><rect x="1" y="2" width="3" height="1" fill="#000"/><rect x="0" y="3" width="2" height="1" fill="#000"/><rect x="2" y="4" width="2" height="1" fill="#000"/><rect x="0" y="5" width="3" height="1" fill="#000"/></svg>
<div class="b" style="left:2px;top:717px;width:1022px;height:17px;background:#ECE9D8"></div>
<div class="b" style="left:2px;top:733px;width:1022px;height:1px;background:#F4F3EC"></div>
<div class="t" style="left:4px;top:720.19px;font-size:11px;line-height:11px;font-weight:normal;color:#000;letter-spacing:0.06px">(c)1996-2004 Juha Hartikainen, Janne Ahonen [http://www.linearteam.org]</div>
<div class="b" style="left:0px;top:734px;width:1024px;height:34px;background:linear-gradient(to bottom,#3168D5 0px,#4A8BF4 1px,#3A7DF0 3px,#2660E6 5px,#245EDC 10px,#2357D8 28px,#1E4FC8 31px,#1A47B8 34px)"></div>
<div class="b" style="left:0px;top:738px;width:138px;height:30px;border-radius:0 10px 0 0;background:linear-gradient(to bottom,#5AB85A 0px,#6CC86C 2px,#48B048 5px,#38A838 10px,#32A032 18px,#2C962C 26px,#2A8A2A 30px);box-shadow:inset -3px 0 3px rgba(0,50,0,0.45)"></div>
<svg class="b" style="left:9px;top:742px" width="22" height="22"><path d="M3 3 Q6 1 10 3 L9 10 Q5.5 8.5 2 10 z" fill="#F06428" stroke="#7A2A10" stroke-width="0.4"/><path d="M11 4 Q15 6 19 4 L17.5 11 Q14 12.5 10 11 z" fill="#8CCB3A" stroke="#3A6A10" stroke-width="0.4"/><path d="M2 11 Q5.5 9.5 9 11 L8 18 Q4.5 16.5 1 18 z" fill="#3C8CF0" stroke="#10307A" stroke-width="0.4"/><path d="M10 12 Q14 13.5 17.5 12 L16 19 Q12 20.5 9 19 z" fill="#FCC21C" stroke="#7A5A08" stroke-width="0.4"/></svg>
<div class="t" style="left:34px;top:744.53px;font-size:16.5px;line-height:16.5px;font-weight:bold;color:#fff;font-style:italic;text-shadow:1px 1px 1px #1A4A1A;letter-spacing:0.3px">Käynnistä</div>
<div class="b" style="left:150px;top:742px;width:2px;height:2px;background:#1A3E9E"></div><div class="b" style="left:152px;top:744px;width:2px;height:2px;background:#1A3E9E"></div><div class="b" style="left:150px;top:746px;width:2px;height:2px;background:#1A3E9E"></div><div class="b" style="left:152px;top:748px;width:2px;height:2px;background:#1A3E9E"></div><div class="b" style="left:150px;top:750px;width:2px;height:2px;background:#1A3E9E"></div><div class="b" style="left:152px;top:752px;width:2px;height:2px;background:#1A3E9E"></div><div class="b" style="left:150px;top:754px;width:2px;height:2px;background:#1A3E9E"></div><div class="b" style="left:152px;top:756px;width:2px;height:2px;background:#1A3E9E"></div><div class="b" style="left:150px;top:758px;width:2px;height:2px;background:#1A3E9E"></div><div class="b" style="left:152px;top:760px;width:2px;height:2px;background:#1A3E9E"></div><div class="b" style="left:150px;top:762px;width:2px;height:2px;background:#1A3E9E"></div><div class="b" style="left:152px;top:764px;width:2px;height:2px;background:#1A3E9E"></div>
<svg class="b" style="left:0px;top:0px" width="1024" height="768"><circle cx="171.5" cy="752.5" r="5.2" fill="none" stroke="#3AAAF0" stroke-width="3"/><rect x="166" y="751.5" width="11" height="2" fill="#3AAAF0"/><path d="M172 756 h5" stroke="#2050A0" stroke-width="1"/><path d="M163.5 760.5 Q163 753 170 748 Q175 744.5 178.5 745" fill="none" stroke="#F0D050" stroke-width="1.8"/><path d="M164.5 759 Q165 754 168 750" fill="none" stroke="#F4A0A0" stroke-width="1"/></svg>
<svg class="b" style="left:0px;top:0px" width="1024" height="768"><rect x="186" y="745" width="15" height="15" fill="#F6EEA8" stroke="#5A6A18" stroke-width="1"/><circle cx="193.5" cy="752.5" r="6.3" fill="#6A7A22"/><circle cx="193.5" cy="752.5" r="4.3" fill="#FFF8C0"/><path d="M192.5 749 v4.5 h3.5" stroke="#4A5A10" stroke-width="1.6" fill="none"/></svg>
<svg class="b" style="left:207px;top:743px" width="18" height="18"><circle cx="9" cy="9" r="7.8" fill="#E86A10"/><circle cx="10" cy="7.5" r="4.8" fill="#3A7AD8"/><circle cx="11" cy="6" r="2" fill="#A8D0F8"/><path d="M2 9 Q3 15 9 16 Q15 16 16.5 10 Q14 13.5 9.5 13 Q5 12.5 4 7 z" fill="#F4A020"/><path d="M3 5 Q5 2 8 3 Q5 5 5.5 8 z" fill="#F8C040"/></svg>
<div class="t" style="left:235px;top:740.00px;font-size:13px;line-height:13px;font-weight:bold;color:#C8D8FF;">»</div>
<div class="b" style="left:252px;top:742px;width:2px;height:2px;background:#1A3E9E"></div><div class="b" style="left:254px;top:744px;width:2px;height:2px;background:#1A3E9E"></div><div class="b" style="left:252px;top:746px;width:2px;height:2px;background:#1A3E9E"></div><div class="b" style="left:254px;top:748px;width:2px;height:2px;background:#1A3E9E"></div><div class="b" style="left:252px;top:750px;width:2px;height:2px;background:#1A3E9E"></div><div class="b" style="left:254px;top:752px;width:2px;height:2px;background:#1A3E9E"></div><div class="b" style="left:252px;top:754px;width:2px;height:2px;background:#1A3E9E"></div><div class="b" style="left:254px;top:756px;width:2px;height:2px;background:#1A3E9E"></div><div class="b" style="left:252px;top:758px;width:2px;height:2px;background:#1A3E9E"></div><div class="b" style="left:254px;top:760px;width:2px;height:2px;background:#1A3E9E"></div><div class="b" style="left:252px;top:762px;width:2px;height:2px;background:#1A3E9E"></div><div class="b" style="left:254px;top:764px;width:2px;height:2px;background:#1A3E9E"></div>
<div class="b" style="left:262px;top:742px;width:157px;height:23px;border-radius:3px;background:linear-gradient(to bottom,#5A9AF8 0,#3C81F3 3px,#3679F0 20px,#2E68DA 23px);box-shadow:inset 1px 1px 0 #6AA8FF"></div>
<svg class="b" style="left:270px;top:744px" width="18" height="18"><circle cx="9" cy="9" r="7.8" fill="#E86A10"/><circle cx="10" cy="7.5" r="4.8" fill="#3A7AD8"/><circle cx="11" cy="6" r="2" fill="#A8D0F8"/><path d="M2 9 Q3 15 9 16 Q15 16 16.5 10 Q14 13.5 9.5 13 Q5 12.5 4 7 z" fill="#F4A020"/><path d="M3 5 Q5 2 8 3 Q5 5 5.5 8 z" fill="#F8C040"/></svg>
<div class="t" style="left:291px;top:748.19px;font-size:11px;line-height:11px;font-weight:normal;color:#fff;letter-spacing:-0.15px">DVD Plaza Forums - R...</div>
<div class="b" style="left:421px;top:742px;width:160px;height:23px;border-radius:3px;background:linear-gradient(to bottom,#1A48B0 0,#1E52B8 3px,#1F54BC 20px,#2558C4 23px);box-shadow:inset 1px 1px 1px #10307A"></div>
<svg class="b" style="left:433px;top:745px" width="16" height="16" shape-rendering="crispEdges"><rect x="0" y="0" width="1" height="1" fill="#C8D8E8"/><rect x="1" y="0" width="1" height="1" fill="#C8D8E8"/><rect x="2" y="0" width="1" height="1" fill="#4E6A48"/><rect x="3" y="0" width="1" height="1" fill="#1A2448"/><rect x="4" y="0" width="1" height="1" fill="#7A8AA0"/><rect x="5" y="0" width="1" height="1" fill="#2A3A60"/><rect x="6" y="0" width="1" height="1" fill="#1A2448"/><rect x="7" y="0" width="1" height="1" fill="#5A6A58"/><rect x="8" y="0" width="1" height="1" fill="#1A2448"/><rect x="9" y="0" width="1" height="1" fill="#5A6A58"/><rect x="10" y="0" width="1" height="1" fill="#1A2448"/><rect x="11" y="0" width="1" height="1" fill="#1A2448"/><rect x="12" y="0" width="1" height="1" fill="#5A6A58"/><rect x="13" y="0" width="1" height="1" fill="#3A4A70"/><rect x="14" y="0" width="1" height="1" fill="#1A2448"/><rect x="15" y="0" width="1" height="1" fill="#0A1030"/><rect x="0" y="1" width="1" height="1" fill="#C8D8E8"/><rect x="1" y="1" width="1" height="1" fill="#C8D8E8"/><rect x="2" y="1" width="1" height="1" fill="#D8E4F4"/><rect x="3" y="1" width="1" height="1" fill="#7A8AA0"/><rect x="4" y="1" width="1" height="1" fill="#5A6A58"/><rect x="5" y="1" width="1" height="1" fill="#8A9AB0"/><rect x="6" y="1" width="1" height="1" fill="#1A2448"/><rect x="7" y="1" width="1" height="1" fill="#3A4A70"/><rect x="8" y="1" width="1" height="1" fill="#2A3A60"/><rect x="9" y="1" width="1" height="1" fill="#D8E4F4"/><rect x="10" y="1" width="1" height="1" fill="#E8F0F8"/><rect x="11" y="1" width="1" height="1" fill="#1A2448"/><rect x="12" y="1" width="1" height="1" fill="#2A3A60"/><rect x="13" y="1" width="1" height="1" fill="#6A5434"/><rect x="14" y="1" width="1" height="1" fill="#1A2448"/><rect x="15" y="1" width="1" height="1" fill="#0A1030"/><rect x="0" y="2" width="1" height="1" fill="#7A8AA0"/><rect x="1" y="2" width="1" height="1" fill="#E8F0F8"/><rect x="2" y="2" width="1" height="1" fill="#1A2448"/><rect x="3" y="2" width="1" height="1" fill="#1A2448"/><rect x="4" y="2" width="1" height="1" fill="#4E6A48"/><rect x="5" y="2" width="1" height="1" fill="#7A8AA0"/><rect x="6" y="2" width="1" height="1" fill="#E8F0F8"/><rect x="7" y="2" width="1" height="1" fill="#D8E4F4"/><rect x="8" y="2" width="1" height="1" fill="#5A6A58"/><rect x="9" y="2" width="1" height="1" fill="#7A8AA0"/><rect x="10" y="2" width="1" height="1" fill="#6A5434"/><rect x="11" y="2" width="1" height="1" fill="#5A6A58"/><rect x="12" y="2" width="1" height="1" fill="#B8CCE8"/><rect x="13" y="2" width="1" height="1" fill="#2A3A60"/><rect x="14" y="2" width="1" height="1" fill="#2A3A60"/><rect x="15" y="2" width="1" height="1" fill="#0A1030"/><rect x="0" y="3" width="1" height="1" fill="#1A2448"/><rect x="1" y="3" width="1" height="1" fill="#D8E4F4"/><rect x="2" y="3" width="1" height="1" fill="#1A2448"/><rect x="3" y="3" width="1" height="1" fill="#2A3A60"/><rect x="4" y="3" width="1" height="1" fill="#5A6A58"/><rect x="5" y="3" width="1" height="1" fill="#B8CCE8"/><rect x="6" y="3" width="1" height="1" fill="#6A5434"/><rect x="7" y="3" width="1" height="1" fill="#2A3A60"/><rect x="8" y="3" width="1" height="1" fill="#8A9AB0"/><rect x="9" y="3" width="1" height="1" fill="#1A2448"/><rect x="10" y="3" width="1" height="1" fill="#5A6A58"/><rect x="11" y="3" width="1" height="1" fill="#6A5434"/><rect x="12" y="3" width="1" height="1" fill="#1A2448"/><rect x="13" y="3" width="1" height="1" fill="#B8CCE8"/><rect x="14" y="3" width="1" height="1" fill="#5A6A58"/><rect x="15" y="3" width="1" height="1" fill="#0A1030"/><rect x="0" y="4" width="1" height="1" fill="#8A9AB0"/><rect x="1" y="4" width="1" height="1" fill="#1A2448"/><rect x="2" y="4" width="1" height="1" fill="#7A8AA0"/><rect x="3" y="4" width="1" height="1" fill="#6A5434"/><rect x="4" y="4" width="1" height="1" fill="#6A5434"/><rect x="5" y="4" width="1" height="1" fill="#2A3A60"/><rect x="6" y="4" width="1" height="1" fill="#2A3A60"/><rect x="7" y="4" width="1" height="1" fill="#5A6A58"/><rect x="8" y="4" width="1" height="1" fill="#6A5434"/><rect x="9" y="4" width="1" height="1" fill="#1A2448"/><rect x="10" y="4" width="1" height="1" fill="#1A2448"/><rect x="11" y="4" width="1" height="1" fill="#2A3A60"/><rect x="12" y="4" width="1" height="1" fill="#4E6A48"/><rect x="13" y="4" width="1" height="1" fill="#1A2448"/><rect x="14" y="4" width="1" height="1" fill="#E8F0F8"/><rect x="15" y="4" width="1" height="1" fill="#0A1030"/><rect x="0" y="5" width="1" height="1" fill="#4E6A48"/><rect x="1" y="5" width="1" height="1" fill="#4E6A48"/><rect x="2" y="5" width="1" height="1" fill="#8A9AB0"/><rect x="3" y="5" width="1" height="1" fill="#6A5434"/><rect x="4" y="5" width="1" height="1" fill="#2A3A60"/><rect x="5" y="5" width="1" height="1" fill="#2A3A60"/><rect x="6" y="5" width="1" height="1" fill="#4E6A48"/><rect x="7" y="5" width="1" height="1" fill="#1A2448"/><rect x="8" y="5" width="1" height="1" fill="#B8CCE8"/><rect x="9" y="5" width="1" height="1" fill="#B8CCE8"/><rect x="10" y="5" width="1" height="1" fill="#D8E4F4"/><rect x="11" y="5" width="1" height="1" fill="#4E6A48"/><rect x="12" y="5" width="1" height="1" fill="#5A6A58"/><rect x="13" y="5" width="1" height="1" fill="#2A3A60"/><rect x="14" y="5" width="1" height="1" fill="#2A3A60"/><rect x="15" y="5" width="1" height="1" fill="#0A1030"/><rect x="0" y="6" width="1" height="1" fill="#6A5434"/><rect x="1" y="6" width="1" height="1" fill="#B8CCE8"/><rect x="2" y="6" width="1" height="1" fill="#2A3A60"/><rect x="3" y="6" width="1" height="1" fill="#3A4A70"/><rect x="4" y="6" width="1" height="1" fill="#1A2448"/><rect x="5" y="6" width="1" height="1" fill="#5A6A58"/><rect x="6" y="6" width="1" height="1" fill="#7A8AA0"/><rect x="7" y="6" width="1" height="1" fill="#D8E4F4"/><rect x="8" y="6" width="1" height="1" fill="#6A5434"/><rect x="9" y="6" width="1" height="1" fill="#3A4A70"/><rect x="10" y="6" width="1" height="1" fill="#2A3A60"/><rect x="11" y="6" width="1" height="1" fill="#B8CCE8"/><rect x="12" y="6" width="1" height="1" fill="#8A9AB0"/><rect x="13" y="6" width="1" height="1" fill="#4E6A48"/><rect x="14" y="6" width="1" height="1" fill="#2A3A60"/><rect x="15" y="6" width="1" height="1" fill="#0A1030"/><rect x="0" y="7" width="1" height="1" fill="#D8E4F4"/><rect x="1" y="7" width="1" height="1" fill="#1A2448"/><rect x="2" y="7" width="1" height="1" fill="#1A2448"/><rect x="3" y="7" width="1" height="1" fill="#2A3A60"/><rect x="4" y="7" width="1" height="1" fill="#D8E4F4"/><rect x="5" y="7" width="1" height="1" fill="#1A2448"/><rect x="6" y="7" width="1" height="1" fill="#3A4A70"/><rect x="7" y="7" width="1" height="1" fill="#D8E4F4"/><rect x="8" y="7" width="1" height="1" fill="#2A3A60"/><rect x="9" y="7" width="1" height="1" fill="#1A2448"/><rect x="10" y="7" width="1" height="1" fill="#5A6A58"/><rect x="11" y="7" width="1" height="1" fill="#2A3A60"/><rect x="12" y="7" width="1" height="1" fill="#7A8AA0"/><rect x="13" y="7" width="1" height="1" fill="#3A4A70"/><rect x="14" y="7" width="1" height="1" fill="#4E6A48"/><rect x="15" y="7" width="1" height="1" fill="#0A1030"/><rect x="0" y="8" width="1" height="1" fill="#E8F0F8"/><rect x="1" y="8" width="1" height="1" fill="#3A4A70"/><rect x="2" y="8" width="1" height="1" fill="#4E6A48"/><rect x="3" y="8" width="1" height="1" fill="#6A5434"/><rect x="4" y="8" width="1" height="1" fill="#5A6A58"/><rect x="5" y="8" width="1" height="1" fill="#E8F0F8"/><rect x="6" y="8" width="1" height="1" fill="#E8F0F8"/><rect x="7" y="8" width="1" height="1" fill="#2A3A60"/><rect x="8" y="8" width="1" height="1" fill="#5A6A58"/><rect x="9" y="8" width="1" height="1" fill="#1A2448"/><rect x="10" y="8" width="1" height="1" fill="#4E6A48"/><rect x="11" y="8" width="1" height="1" fill="#1A2448"/><rect x="12" y="8" width="1" height="1" fill="#D8E4F4"/><rect x="13" y="8" width="1" height="1" fill="#8A9AB0"/><rect x="14" y="8" width="1" height="1" fill="#5A6A58"/><rect x="15" y="8" width="1" height="1" fill="#0A1030"/><rect x="0" y="9" width="1" height="1" fill="#1A2448"/><rect x="1" y="9" width="1" height="1" fill="#E8F0F8"/><rect x="2" y="9" width="1" height="1" fill="#1A2448"/><rect x="3" y="9" width="1" height="1" fill="#1A2448"/><rect x="4" y="9" width="1" height="1" fill="#1A2448"/><rect x="5" y="9" width="1" height="1" fill="#1A2448"/><rect x="6" y="9" width="1" height="1" fill="#2A3A60"/><rect x="7" y="9" width="1" height="1" fill="#1A2448"/><rect x="8" y="9" width="1" height="1" fill="#3A4A70"/><rect x="9" y="9" width="1" height="1" fill="#4E6A48"/><rect x="10" y="9" width="1" height="1" fill="#1A2448"/><rect x="11" y="9" width="1" height="1" fill="#2A3A60"/><rect x="12" y="9" width="1" height="1" fill="#B8CCE8"/><rect x="13" y="9" width="1" height="1" fill="#4E6A48"/><rect x="14" y="9" width="1" height="1" fill="#5A6A58"/><rect x="15" y="9" width="1" height="1" fill="#0A1030"/><rect x="0" y="10" width="1" height="1" fill="#1A2448"/><rect x="1" y="10" width="1" height="1" fill="#5A6A58"/><rect x="2" y="10" width="1" height="1" fill="#B8CCE8"/><rect x="3" y="10" width="1" height="1" fill="#5A6A58"/><rect x="4" y="10" width="1" height="1" fill="#2A3A60"/><rect x="5" y="10" width="1" height="1" fill="#1A2448"/><rect x="6" y="10" width="1" height="1" fill="#6A5434"/><rect x="7" y="10" width="1" height="1" fill="#6A5434"/><rect x="8" y="10" width="1" height="1" fill="#B8CCE8"/><rect x="9" y="10" width="1" height="1" fill="#3A4A70"/><rect x="10" y="10" width="1" height="1" fill="#1A2448"/><rect x="11" y="10" width="1" height="1" fill="#1A2448"/><rect x="12" y="10" width="1" height="1" fill="#E8F0F8"/><rect x="13" y="10" width="1" height="1" fill="#2A3A60"/><rect x="14" y="10" width="1" height="1" fill="#4E6A48"/><rect x="15" y="10" width="1" height="1" fill="#0A1030"/><rect x="0" y="11" width="1" height="1" fill="#3A4A70"/><rect x="1" y="11" width="1" height="1" fill="#6A5434"/><rect x="2" y="11" width="1" height="1" fill="#2A3A60"/><rect x="3" y="11" width="1" height="1" fill="#E8F0F8"/><rect x="4" y="11" width="1" height="1" fill="#D8E4F4"/><rect x="5" y="11" width="1" height="1" fill="#4E6A48"/><rect x="6" y="11" width="1" height="1" fill="#B8CCE8"/><rect x="7" y="11" width="1" height="1" fill="#E8F0F8"/><rect x="8" y="11" width="1" height="1" fill="#2A3A60"/><rect x="9" y="11" width="1" height="1" fill="#1A2448"/><rect x="10" y="11" width="1" height="1" fill="#6A5434"/><rect x="11" y="11" width="1" height="1" fill="#7A8AA0"/><rect x="12" y="11" width="1" height="1" fill="#E8F0F8"/><rect x="13" y="11" width="1" height="1" fill="#2A3A60"/><rect x="14" y="11" width="1" height="1" fill="#2A3A60"/><rect x="15" y="11" width="1" height="1" fill="#0A1030"/><rect x="0" y="12" width="1" height="1" fill="#6A5434"/><rect x="1" y="12" width="1" height="1" fill="#8A9AB0"/><rect x="2" y="12" width="1" height="1" fill="#3A4A70"/><rect x="3" y="12" width="1" height="1" fill="#6A5434"/><rect x="4" y="12" width="1" height="1" fill="#6A5434"/><rect x="5" y="12" width="1" height="1" fill="#6A5434"/><rect x="6" y="12" width="1" height="1" fill="#2A3A60"/><rect x="7" y="12" width="1" height="1" fill="#5A6A58"/><rect x="8" y="12" width="1" height="1" fill="#2A3A60"/><rect x="9" y="12" width="1" height="1" fill="#1A2448"/><rect x="10" y="12" width="1" height="1" fill="#1A2448"/><rect x="11" y="12" width="1" height="1" fill="#B8CCE8"/><rect x="12" y="12" width="1" height="1" fill="#5A6A58"/><rect x="13" y="12" width="1" height="1" fill="#1A2448"/><rect x="14" y="12" width="1" height="1" fill="#4E6A48"/><rect x="15" y="12" width="1" height="1" fill="#0A1030"/><rect x="0" y="13" width="1" height="1" fill="#2A3A60"/><rect x="1" y="13" width="1" height="1" fill="#6A5434"/><rect x="2" y="13" width="1" height="1" fill="#4E6A48"/><rect x="3" y="13" width="1" height="1" fill="#2A3A60"/><rect x="4" y="13" width="1" height="1" fill="#8A9AB0"/><rect x="5" y="13" width="1" height="1" fill="#1A2448"/><rect x="6" y="13" width="1" height="1" fill="#1A2448"/><rect x="7" y="13" width="1" height="1" fill="#5A6A58"/><rect x="8" y="13" width="1" height="1" fill="#2A3A60"/><rect x="9" y="13" width="1" height="1" fill="#5A6A58"/><rect x="10" y="13" width="1" height="1" fill="#E8F0F8"/><rect x="11" y="13" width="1" height="1" fill="#3A4A70"/><rect x="12" y="13" width="1" height="1" fill="#5A6A58"/><rect x="13" y="13" width="1" height="1" fill="#4E6A48"/><rect x="14" y="13" width="1" height="1" fill="#6A5434"/><rect x="15" y="13" width="1" height="1" fill="#0A1030"/><rect x="0" y="14" width="1" height="1" fill="#1A2448"/><rect x="1" y="14" width="1" height="1" fill="#4E6A48"/><rect x="2" y="14" width="1" height="1" fill="#3A4A70"/><rect x="3" y="14" width="1" height="1" fill="#6A5434"/><rect x="4" y="14" width="1" height="1" fill="#6A5434"/><rect x="5" y="14" width="1" height="1" fill="#5A6A58"/><rect x="6" y="14" width="1" height="1" fill="#1A2448"/><rect x="7" y="14" width="1" height="1" fill="#6A5434"/><rect x="8" y="14" width="1" height="1" fill="#2A3A60"/><rect x="9" y="14" width="1" height="1" fill="#E8F0F8"/><rect x="10" y="14" width="1" height="1" fill="#5A6A58"/><rect x="11" y="14" width="1" height="1" fill="#5A6A58"/><rect x="12" y="14" width="1" height="1" fill="#3A4A70"/><rect x="13" y="14" width="1" height="1" fill="#6A5434"/><rect x="14" y="14" width="1" height="1" fill="#1A2448"/><rect x="15" y="14" width="1" height="1" fill="#0A1030"/><rect x="0" y="15" width="1" height="1" fill="#0A1030"/><rect x="1" y="15" width="1" height="1" fill="#0A1030"/><rect x="2" y="15" width="1" height="1" fill="#0A1030"/><rect x="3" y="15" width="1" height="1" fill="#0A1030"/><rect x="4" y="15" width="1" height="1" fill="#0A1030"/><rect x="5" y="15" width="1" height="1" fill="#0A1030"/><rect x="6" y="15" width="1" height="1" fill="#0A1030"/><rect x="7" y="15" width="1" height="1" fill="#0A1030"/><rect x="8" y="15" width="1" height="1" fill="#0A1030"/><rect x="9" y="15" width="1" height="1" fill="#0A1030"/><rect x="10" y="15" width="1" height="1" fill="#0A1030"/><rect x="11" y="15" width="1" height="1" fill="#0A1030"/><rect x="12" y="15" width="1" height="1" fill="#0A1030"/><rect x="13" y="15" width="1" height="1" fill="#0A1030"/><rect x="14" y="15" width="1" height="1" fill="#0A1030"/><rect x="15" y="15" width="1" height="1" fill="#0A1030"/></svg>
<div class="t" style="left:452px;top:748.19px;font-size:11px;line-height:11px;font-weight:normal;color:#fff;letter-spacing:-0.35px">WinISD alpha</div>
<div class="b" style="left:751px;top:742px;width:2px;height:2px;background:#1A3E9E"></div><div class="b" style="left:753px;top:744px;width:2px;height:2px;background:#1A3E9E"></div><div class="b" style="left:751px;top:746px;width:2px;height:2px;background:#1A3E9E"></div><div class="b" style="left:753px;top:748px;width:2px;height:2px;background:#1A3E9E"></div><div class="b" style="left:751px;top:750px;width:2px;height:2px;background:#1A3E9E"></div><div class="b" style="left:753px;top:752px;width:2px;height:2px;background:#1A3E9E"></div><div class="b" style="left:751px;top:754px;width:2px;height:2px;background:#1A3E9E"></div><div class="b" style="left:753px;top:756px;width:2px;height:2px;background:#1A3E9E"></div><div class="b" style="left:751px;top:758px;width:2px;height:2px;background:#1A3E9E"></div><div class="b" style="left:753px;top:760px;width:2px;height:2px;background:#1A3E9E"></div><div class="b" style="left:751px;top:762px;width:2px;height:2px;background:#1A3E9E"></div><div class="b" style="left:753px;top:764px;width:2px;height:2px;background:#1A3E9E"></div>
<div class="t" style="left:764px;top:748.19px;font-size:11px;line-height:11px;font-weight:normal;color:#fff;">FI</div>
<div class="b" style="left:787px;top:734px;width:237px;height:34px;background:linear-gradient(to bottom,#1590E8 0,#22A6F6 2px,#0C97F0 8px,#0B8DE6 28px,#0A80D8 34px);box-shadow:inset 1px 0 0 #0A5CBE"></div>
<svg class="b" style="left:0px;top:0px" width="1024" height="768"><rect x="805" y="746" width="7" height="7" fill="#3A2A6A" stroke="#C8D0F0" stroke-width="1"/><rect x="798" y="751" width="8" height="8" fill="#3A2A6A" stroke="#D8D8F0" stroke-width="1"/><rect x="800" y="758" width="5" height="2" fill="#fff"/><path d="M816 748 Q823.5 744 831 748 L829 751 Q823.5 748 818 751 z" fill="#E8ECF4"/><path d="M818.5 753 Q823.5 750 828.5 753 L826.5 756 Q823.5 754 820.5 756 z" fill="#E0E4EC"/><path d="M821 757.5 Q823.5 756 826 757.5 L823.5 760 z" fill="#4A5A8A"/><circle cx="841" cy="752" r="6" fill="#5A5A6A" stroke="#D0D0D8" stroke-width="1.5"/><circle cx="840" cy="751" r="2" fill="#C8C8C8"/><path d="M845 759 l3 -4" stroke="#C0D8FF" stroke-width="1.2"/><rect x="855" y="746" width="10" height="8" fill="#8A7A7A" stroke="#F0E8E0" stroke-width="1.2"/><rect x="852" y="751" width="6" height="6" fill="#9A8A8A" stroke="#F0E8E0" stroke-width="1"/><circle cx="863" cy="756" r="4.5" fill="#fff"/><path d="M860.5 756 l2 2 l3.5 -4" stroke="#1A9A1A" stroke-width="1.8" fill="none"/><circle cx="874.5" cy="748" r="2" fill="#9AD8F8"/><path d="M872 758 q2.5 -8 5 0 z" fill="#7AC0E8"/><circle cx="880" cy="749" r="2.5" fill="#7AD070"/><path d="M877 758 q3 -9 6 0 z" fill="#5AB050"/><circle cx="882" cy="756.5" r="3.8" fill="#D02828"/><path d="M880.5 755 l3 3 M883.5 755 l-3 3" stroke="#fff" stroke-width="1.2"/><path d="M890 746 h12 v14 h-12 z" fill="#1A1AC8" stroke="#E0E8FF" stroke-width="1.2"/><path d="M889 747 v13 h2" stroke="#10108A" stroke-width="1" fill="none"/><path d="M907 746 q0 8 5 9 l5 1" stroke="#F0F0F0" stroke-width="1.6" fill="none"/><path d="M912 754 l6 0 l3 3 l-4 2 l-6 -2 z" fill="#E0E0E0" stroke="#303030" stroke-width="0.8"/><rect x="917" y="756" width="4" height="3" fill="#D8D040"/><rect x="926" y="748" width="11" height="8" fill="#F0C850" stroke="#A88A30" stroke-width="0.8"/><path d="M934 746.5 h4 v12 h-4" stroke="#E8F0FF" stroke-width="1.3" fill="none"/><rect x="943" y="746" width="14" height="10" fill="#8A8A8A" stroke="#2A3A5A" stroke-width="1"/><rect x="944" y="757" width="4" height="2" fill="#5A6A7A"/><rect x="952" y="757" width="4" height="2" fill="#5A6A7A"/><path d="M961 754 l6 -8 q5 1 8 6 l-4 7 q-6 0 -10 -5 z" fill="#E8E030" stroke="#3A3A20" stroke-width="0.8"/><path d="M961 756 q7 4 13 1" stroke="#F0F0F0" stroke-width="1.5" fill="none"/></svg>
<div class="t" style="left:983px;top:747.69px;font-size:11px;line-height:11px;font-weight:normal;color:#fff;">22:06</div>
</body></html>
